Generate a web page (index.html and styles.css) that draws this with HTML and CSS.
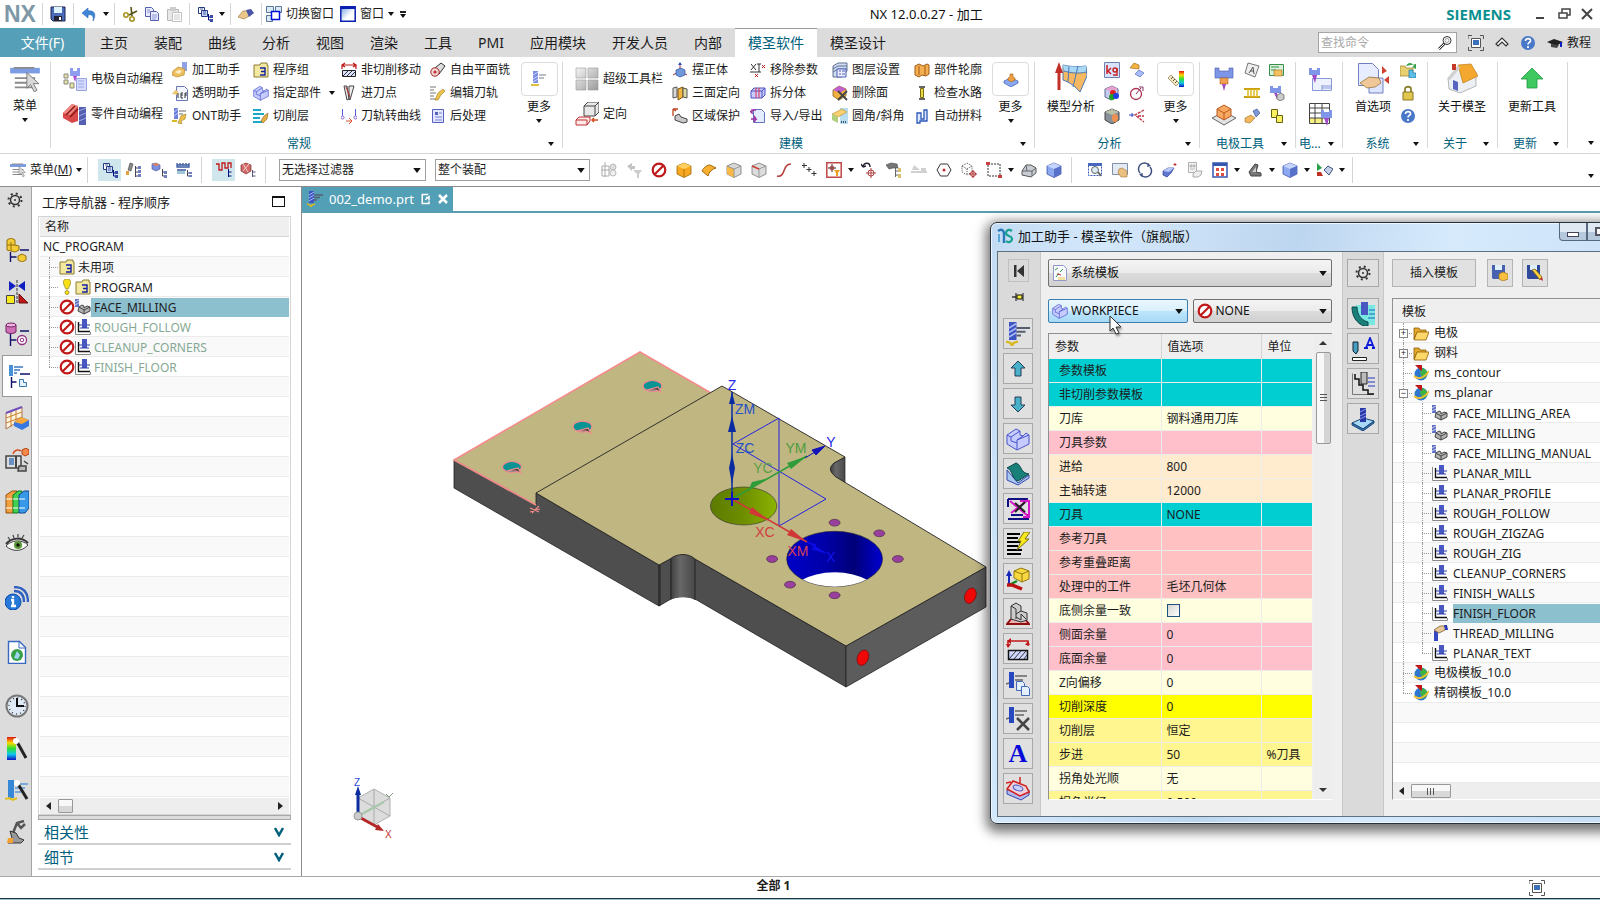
FILE: index.html
```html
<!DOCTYPE html>
<html lang="zh-CN">
<head>
  <meta charset="UTF-8">
  <title>NX 12.0.0.27 - 加工</title>
  <link rel="stylesheet" href="styles.css">
</head>
<body>
  <!-- icon sprite -->
  <svg class="sprite" width="0" height="0">
    <defs>
      <linearGradient id="rainbow" x1="0" y1="0" x2="0" y2="1">
        <stop offset="0" stop-color="#e01010"/><stop offset=".25" stop-color="#ffd800"/><stop offset=".5" stop-color="#30e030"/><stop offset=".75" stop-color="#10c8f0"/><stop offset="1" stop-color="#1010c0"/>
      </linearGradient>
      <linearGradient id="steel" x1="0" y1="0" x2="1" y2="1">
        <stop offset="0" stop-color="#f4f4f4"/><stop offset="1" stop-color="#9a9a9a"/>
      </linearGradient>
      <linearGradient id="sky" x1="0" y1="0" x2="1" y2="1">
        <stop offset="0" stop-color="#6f9fe0"/><stop offset=".6" stop-color="#fff"/>
      </linearGradient>
    </defs>
    <symbol id="down" viewBox="0 0 6 4"><path d="M0 0h6L3 4z" fill="#111"/></symbol>
    <symbol id="save" viewBox="0 0 16 16"><path d="M1 1h14v14H3l-2-2z" fill="#4a6cb8" stroke="#1b2450"/><path d="M4 1h8v6H4z" fill="#dff3fb"/><path d="M4 10h8v5H4z" fill="#223"/><path d="M9 11h2v3H9z" fill="#fff"/></symbol>
    <symbol id="undo" viewBox="0 0 16 16"><path d="M1 7l6-5v3c6-1 9 3 5 10 1-5-1-7-5-6v3z" fill="#3f86d8" stroke="#2a66b4" stroke-width=".6"/></symbol>
    <symbol id="cut" viewBox="0 0 16 16"><path d="M9 1l1 9M15 5L7 9" stroke="#56511a" stroke-width="1.600"/><g fill="none" stroke="#a8951f" stroke-width="1.600"><circle cx="4" cy="9" r="2.200"/><circle cx="10" cy="13" r="2.200"/></g></symbol>
    <symbol id="copy" viewBox="0 0 16 16"><g fill="#e9ecff" stroke="#5560b0"><path d="M1.500 1.500h6l2 2v7h-8z"/><path d="M6.500 5.500h6l2 2v7h-8z"/></g><path d="M8 9h5M8 11h5M8 13h4M3 4h3M3 6h3" stroke="#7680c8" stroke-width=".8"/></symbol>
    <symbol id="paste" viewBox="0 0 16 16"><path d="M1.500 3.500h11v11h-11z" fill="#e8e8e8" stroke="#b8b8b8"/><path d="M4 1h6v4H4z" fill="#ccc"/><path d="M6.500 6.500h9v9h-9z" fill="#fff" stroke="#c0c0c0"/><path d="M8 9h6M8 11h6M8 13h6" stroke="#ccc"/></symbol>
    <symbol id="tree" viewBox="0 0 16 16"><path d="M1.500 1.500h6v6h-6z" fill="#fff" stroke="#223a80"/><path d="M4.500 4.500h6v6h-6z" fill="#cdd8ff" stroke="#223a80"/><path d="M6 6h3M6 8h3M3 3h3" stroke="#223a80" stroke-width=".8"/><path d="M11.500 8v6h3M11.500 11h3" stroke="#000c80" fill="none"/><path d="M13 9h3v3h-3zM13 13h3v3h-3z" fill="#3a4aa8"/></symbol>
    <symbol id="eraser" viewBox="0 0 16 16"><path d="M0 11l5-6 5 0 1 5-5 3z" fill="#e9c88a" stroke="#a07840" stroke-width=".7"/><path d="M8 4l5-1 3 4-5 4z" fill="#4b55a8"/></symbol>
    <symbol id="windows" viewBox="0 0 16 16"><g fill="#dcebf8" stroke="#5b7896"><path d="M.5.5h7v6h-7zM9.500.500h6v6h-6zM.5 9.500h6v6h-6z"/></g><path d="M5.500 5.500h8v8h-8z" fill="#fff" stroke="#0010d8" stroke-width="1.500"/></symbol>
    <symbol id="window" viewBox="0 0 16 16"><path d="M.8.8h14.400v14.400H.8z" fill="url(#sky)" stroke="#0a1eb0" stroke-width="1.500"/><path d="M1 2h14" stroke="#0a1eb0" stroke-width="2"/></symbol>
    <symbol id="menu" viewBox="0 0 32 28"><path d="M0 2h32v6H0z" fill="#7c9ce4"/><path d="M4 1h22v2H4zM5 12h22v2H5zM5 17h18v2H5zM5 22h22v2H5z" fill="#8b8b8b"/><path d="M18 7v17l4-4 4 8 3-2-4-7h6z" fill="#d8d8d8" stroke="#777"/></symbol>
    <symbol id="tool" viewBox="0 0 16 16"><path d="M2 0h5v12H2z" fill="#3d55c0"/><path d="M2 4l5-3M2 7l5-3M2 10l5-3" stroke="#a8b8f8"/><path d="M7 4h9M7 6.500h6M7 9h3" stroke="#555d70" stroke-width="1.300"/><path d="M0 13l3 1 1 2 1-2 3-1" stroke="#d8b820" stroke-width="1.500" fill="none"/></symbol>
    <symbol id="toolpale" viewBox="0 0 16 16"><path d="M2 0h5v12H2z" fill="#7c8fe0"/><path d="M2 4l5-3M2 8l5-3M2 11l5-3" stroke="#c8d2ff"/><path d="M8 4h7M8 7h5" stroke="#777e90"/><path d="M0 14h8" stroke="#e0c040" stroke-width="2"/></symbol>
    <symbol id="autoe" viewBox="0 0 24 24"><path d="M7 1h3v3h4V1h3v8H7z" fill="#8d9df0"/><path d="M10 9h4l-2 6z" fill="#b050d8"/><path d="M1 7h4v4H1zM1 13h4v4H1zM7 16h4v5H7z" fill="#e8e2a0" stroke="#888"/><path d="M13.500 11.500h10v12h-10z" fill="#d6dcff" stroke="#98a4e0"/><path d="M15 14h6M15 17h6M15 20h6" stroke="#98a4e0"/></symbol>
    <symbol id="autop" viewBox="0 0 24 24"><path d="M0 11l9-9 6 2v15l-6 2-9-5z" fill="#d84848"/><path d="M0 11l9-9 6 2-8 9z" fill="#f08a80"/><path d="M3 13l9-9M7 15l8-8" stroke="#8a1818" stroke-width="1.500"/><path d="M16 5h7v18h-7z" fill="#5560b0"/><path d="M16 9l7-3M16 14l7-3M16 19l7-3" stroke="#9aa4e8"/></symbol>
    <symbol id="assist" viewBox="0 0 16 16"><path d="M10 0h5v9h-5z" fill="#8fa2e8"/><path d="M1 9l5-4 7 2-1 6-7 2-5-2z" fill="#ecc060" stroke="#b88828" stroke-width=".7"/><path d="M3 10l4-2 3 1-3 3z" fill="#fdf0c8"/></symbol>
    <symbol id="trans" viewBox="0 0 16 16"><path d="M4.500 1.500h8l3 3v11h-11z" fill="#f4f6ff" stroke="#6a74b0"/><path d="M0 9l3-4 3 1v4z" fill="#ecc878"/><path d="M6 8v5M9 8h2M9 8v5M9 10h2M9 13h2M13 13V8h2M13 10h2" stroke="#333" fill="none"/></symbol>
    <symbol id="ont" viewBox="0 0 16 16"><path d="M2 0h4v11H2z" fill="#6f80d8"/><path d="M2 4l4-3M2 8l4-3" stroke="#c0ccff"/><path d="M7 3h7M7 6h4" stroke="#666"/><path d="M6 15l3-7 5-2-1 5-4 2 1 3z" fill="#ecc24c" stroke="#a07818" stroke-width=".6"/><path d="M0 13h5" stroke="#d8b820" stroke-width="2"/></symbol>
    <symbol id="progfolder" viewBox="0 0 16 16"><path d="M1 3h6l1-2h6v2h1v12H1z" fill="#f3e8a0" stroke="#8c7c30"/><path d="M7 6h5v7H7M8 9.500h4" stroke="#1420a0" stroke-width="1.400" fill="none"/></symbol>
    <symbol id="block" viewBox="0 0 24 24"><path d="M1 8l9-6 4 2v4l3 1 3-3 3 2v9l-12 6-10-6z" fill="#c6ccff" stroke="#4a55c8"/><path d="M1 8l4 2 9-6M5 10v4l6 2v7M11 16v-3l6-4M11 13l12-5" stroke="#4a55c8" fill="none"/></symbol>
    <symbol id="layers" viewBox="0 0 16 16"><path d="M0 2h8M0 6h11M0 10h7M0 14h9" stroke="#1ea8c8" stroke-width="1.800"/><path d="M8 13l3-5 4-3-1 6-4 4z" fill="#e8b040" stroke="#80581c" stroke-width=".6"/></symbol>
    <symbol id="noncut" viewBox="0 0 16 16"><path d="M1 7V3h14v4M4 1L1 3l3 2M12 1l3 2-3 2" stroke="#c01818" fill="none" stroke-width="1.200"/><path d="M1.500 8.500h13v6h-13z" fill="#dce2ff" stroke="#222"/><path d="M2 14l5-5M6 14l5-5M10 14l4-4" stroke="#333"/></symbol>
    <symbol id="entry" viewBox="0 0 16 16"><path d="M3 1h3l2 13-2 1zM8 1h5L9 15l-1-1z" fill="#eee" stroke="#444"/><path d="M5 2l4 10" stroke="#c03030"/></symbol>
    <symbol id="tocurve" viewBox="0 0 16 16"><path d="M1.500 1v7M14.500 1v7" stroke="#5560d0"/><circle cx="1.500" cy="9.500" r="1.500" fill="none" stroke="#8060d0"/><circle cx="14.500" cy="9.500" r="1.500" fill="none" stroke="#8060d0"/><path d="M5 13h5M8 10l3 3-3 3" stroke="#e05030" fill="none"/></symbol>
    <symbol id="freeplane" viewBox="0 0 16 16"><path d="M5 6l6-5 4 3-6 8z" fill="#ddd" stroke="#333"/><circle cx="5" cy="10" r="4.200" fill="#f4d8d8" stroke="#a02020"/><circle cx="5" cy="10" r="1.600" fill="#c03030"/></symbol>
    <symbol id="editpath" viewBox="0 0 16 16"><path d="M0 2h6M0 5h4M0 8h6M0 11h4M0 14h6" stroke="#777"/><path d="M5 15l3-7 5-4 2 2-4 4-3 5z" fill="#ecc24c" stroke="#9a7a18" stroke-width=".6"/></symbol>
    <symbol id="post" viewBox="0 0 16 16"><path d="M2.500 1.500h11v13h-11z" fill="#e4e8ff" stroke="#5560c0"/><path d="M5 4h3v3H5z" fill="#5560c0"/><path d="M9 5h3M5 9h7M5 12h7" stroke="#7680d8"/></symbol>
    <symbol id="tiles" viewBox="0 0 24 24"><path d="M1 1h10v10H1zM13 1h10v10H13zM1 13h10v10H1zM13 13h10v10H13z" fill="url(#steel)" stroke="#999" stroke-width=".6"/></symbol>
    <symbol id="orient" viewBox="0 0 24 24"><path d="M9 4l4-4h11v10l-4 4H9zM9 4h11v10M20 4l4-4" fill="#e8e8e8" stroke="#444"/><path d="M1 18l3-3h11v4l-3 4H1zM1 18h11v5" fill="#ffe8e8" stroke="#c03030"/><path d="M23 18h-6M19 16l-2 2 2 2" stroke="#d05020" fill="none" stroke-width="1.500"/></symbol>
    <symbol id="straight" viewBox="0 0 16 16"><path d="M8 1v8M8 9l7 4M8 9l-7 4" stroke="#b03030" fill="none"/><path d="M8 0l2 3H6z" fill="#3050c0"/><path d="M4 8l5-2 4 2v5l-5 2-4-2z" fill="#6f98d8" stroke="#3050a0" stroke-width=".7"/></symbol>
    <symbol id="threeface" viewBox="0 0 16 16"><path d="M1 3l4-1v10l-4 1z" fill="#d8d8d8" stroke="#555"/><path d="M6 4l5-2v10l-5 3z" fill="#f4b840" stroke="#7a5410"/><path d="M11 3l4 1v9l-4-1z" fill="#dcd8a0" stroke="#555"/></symbol>
    <symbol id="region" viewBox="0 0 16 16"><path d="M1 1v7M1 1l3 2M1 1h5" stroke="#c04020" fill="none" stroke-width="1.300"/><path d="M3 8l4-2 2 3 6 2v3l-4 1-8-3z" fill="#c8c8c8" stroke="#444"/></symbol>
    <symbol id="rmparam" viewBox="0 0 16 16"><path d="M1 2l5 6M6 2L1 8M9 2v8M7 2h4M0 10h11" stroke="#333"/><path d="M12 3l3 3M15 3l-3 3M5 12l3 3M8 12l-3 3" stroke="#c02020"/></symbol>
    <symbol id="split" viewBox="0 0 16 16"><path d="M1 6l3-3h11v7l-3 3H1z" fill="#c8ccff" stroke="#4a50c0"/><path d="M1 6h11v7M12 6l3-3" stroke="#4a50c0" fill="none"/><path d="M6 3v10M9 3v10" stroke="#e03050"/></symbol>
    <symbol id="impexp" viewBox="0 0 16 16"><path d="M3.500 1.500h8l3 3v10h-11z" fill="#e4ecff" stroke="#6074c0"/><path d="M6 2H2v3L0 3M1 11h5l-2-3M6 11l-2 3" stroke="#a030a0" fill="none" stroke-width="1.500"/></symbol>
    <symbol id="layerset" viewBox="0 0 16 16"><path d="M1 4l5-3h9v8l-5 6H1z" fill="#d0dcf4" stroke="#607090"/><path d="M1 7l5-3h9M1 10l5-3h9" stroke="#607090" fill="none"/><path d="M5 7h9v8H5z" fill="#eef" stroke="#4a60b8"/><path d="M7 9h2M10 9h3M7 12h2M10 12h3" stroke="#4a60b8"/></symbol>
    <symbol id="delface" viewBox="0 0 16 16"><path d="M1 5l6-4 7 3v7l-7 4-6-4z" fill="#f0b040" stroke="#805010" stroke-width=".7"/><path d="M1 5l6-4 7 3-6 4z" fill="#c060d0"/><path d="M6 6l9 9M15 6l-9 9" stroke="#444" stroke-width="1.800"/></symbol>
    <symbol id="chamfer" viewBox="0 0 16 16"><path d="M8 0h8v16H8z" fill="#b8dcf0"/><path d="M0 6l10-5 5 3-9 5z" fill="#f8d070" stroke="#b08830" stroke-width=".6"/><path d="M0 6l6 3v6l-6-3z" fill="#b0d080"/><path d="M9 14h6" stroke="#223" stroke-dasharray="1 1" stroke-width="1.500"/></symbol>
    <symbol id="outline" viewBox="0 0 16 16"><path d="M1 4l4-2 4 2 4-2 2 1v9l-3 2-4-1-3 2-4-2z" fill="#f4b050" stroke="#a05818"/><path d="M5 4v9M11 4v9" stroke="#a05818"/></symbol>
    <symbol id="water" viewBox="0 0 16 16"><path d="M5 1h6v2H5zM5 13h6v2H5z" fill="#666"/><path d="M6.500 3.500h3v9h-3z" fill="#f0d840" stroke="#7a6c10"/></symbol>
    <symbol id="join" viewBox="0 0 16 16"><path d="M3 15V5h4v6h3V2h3v11H6v2z" fill="#dce8ff" stroke="#2c58b8" stroke-width="1.300"/></symbol>
    <symbol id="stamp" viewBox="0 0 16 16"><path d="M1 10l7-3 7 3v2l-7 4-7-4z" fill="#88a8f0" stroke="#3858b0" stroke-width=".7"/><path d="M5 9V7l2-1V3h3v3l2 1v2L8 11z" fill="#f0a040" stroke="#a06010" stroke-width=".6"/></symbol>
    <symbol id="surf" viewBox="0 0 32 32"><path d="M8 3c8 2 16 2 23 1l1 10-7 16C20 24 14 20 8 18z" fill="#f6b860" stroke="#4a78b8"/><path d="M8 3c8 2 16 2 23 1v6C24 11 16 11 9 9z" fill="#a8d8f4"/><path d="M14 4l-1 16M23 4l-5 21M9 9c7 2 15 3 22 1" stroke="#4a78b8" fill="none"/><path d="M4 28V8" stroke="#c03028" stroke-width="3"/><path d="M4 0l4 11H0z" fill="#c03028"/></symbol>
    <symbol id="kg" viewBox="0 0 16 16"><path d="M.5.5h15v15H.5z" fill="#d8e4ff" stroke="#7080b0"/><path d="M3 3v9M7 6l-3 3 3 3" stroke="#c82020" fill="none" stroke-width="1.500"/><circle cx="11" cy="8" r="2" fill="none" stroke="#c82020" stroke-width="1.400"/><path d="M13 6v7h-4" stroke="#c82020" fill="none" stroke-width="1.400"/></symbol>
    <symbol id="rgbcube" viewBox="0 0 16 16"><path d="M1 4l7-3 6 3v8l-7 3-6-3z" fill="#c4ccf0" stroke="#606890"/><path d="M1 4l7-3 6 3-7 3z" fill="#e8a0d0"/><circle cx="9" cy="8" r="3" fill="#e02020"/><circle cx="8" cy="12" r="3" fill="#20a020"/><circle cx="12" cy="11" r="3" fill="#2040e0"/></symbol>
    <symbol id="cubehole" viewBox="0 0 16 16"><path d="M1 4l7-3 7 3v8l-7 4-7-4z" fill="#8a9098" stroke="#444"/><path d="M1 4l7-3 7 3-7 3z" fill="#b8c0a8"/><ellipse cx="11" cy="10" rx="3" ry="4" fill="#f09050"/></symbol>
    <symbol id="compare" viewBox="0 0 16 16"><path d="M1 6l4-5 5 2v4z" fill="#f4b040" stroke="#9a6414" stroke-width=".6"/><path d="M6 12l4-4 5 3-4 4z" fill="#a8bcf8" stroke="#4058b8" stroke-width=".6"/></symbol>
    <symbol id="radius" viewBox="0 0 16 16"><circle cx="7" cy="9" r="5.500" fill="none" stroke="#b03050" stroke-width="1.300"/><path d="M7 9l5-6M10 2h4v4" stroke="#803060" fill="none"/></symbol>
    <symbol id="draft" viewBox="0 0 16 16"><path d="M15 2L6 7l9 7M9 8h6" stroke="#c03040" fill="none" stroke-dasharray="3 1" stroke-width="1.300"/><path d="M5 7H0M3 5v4" stroke="#3040c0"/></symbol>
    <symbol id="rule" viewBox="0 0 16 16"><path d="M11 0h5v16h-5z" fill="url(#rainbow)"/><path d="M0 7l3-3 8 8-3 3z" fill="#f4e8c0" stroke="#907850" stroke-width=".7"/><path d="M3 8l2-2M5 10l2-2M7 12l2-2" stroke="#554"/></symbol>
    <symbol id="electrode" viewBox="0 0 24 24"><path d="M3 1h4v3h10V1h4v10H3z" fill="#7f95e8" stroke="#4458a8" stroke-width=".6"/><path d="M8 11h8v6H8z" fill="#f0a050" stroke="#b06820" stroke-width=".6"/><path d="M10 17h4l-2 7z" fill="#a048c8"/></symbol>
    <symbol id="ebox" viewBox="0 0 24 24"><path d="M0 16l12-6 12 6-12 7z" fill="#e4e4e4" stroke="#666"/><path d="M5 7l7-4 7 4v7l-7 4-7-4z" fill="#f8a860" stroke="#b85a20"/><path d="M5 7l7 4 7-4M12 11v7" stroke="#b85a20" fill="none"/></symbol>
    <symbol id="asheet" viewBox="0 0 16 16"><path d="M4 1l11 3-4 11L1 11z" fill="#eee" stroke="#777"/><path d="M5 11l4-6 1 7M6 9h4" stroke="#555" fill="none"/></symbol>
    <symbol id="yellowt" viewBox="0 0 16 16"><path d="M0 4h16M0 12h16" stroke="#c8a010" stroke-width="2"/><path d="M4 4v8M7 4v8M10 4v8M13 4v8" stroke="#e0bc20" stroke-width="1.500"/></symbol>
    <symbol id="pencil" viewBox="0 0 16 16"><path d="M1 10l6-3 4 3-5 5-5-1z" fill="#f4b860" stroke="#a07020" stroke-width=".6"/><path d="M9 3l4-2 3 4-4 4z" fill="#8098d8" stroke="#304080" stroke-width=".6"/></symbol>
    <symbol id="card" viewBox="0 0 16 16"><path d="M.500 2.500h14v11H.500z" fill="#d8f0dc" stroke="#389048"/><path d="M2 5h8M2 8h5" stroke="#389048"/><path d="M5 8h8v6H5z" fill="#f4c060" stroke="#a07020" stroke-width=".6"/></symbol>
    <symbol id="esmall" viewBox="0 0 16 16"><path d="M1 1h3v2h5V1h3v7H1z" fill="#7f95e8"/><path d="M5 8h3v6z" fill="#a048c8"/><path d="M8 10l4-2 3 2v4l-4 2-3-2z" fill="#ccc" stroke="#555" stroke-width=".7"/></symbol>
    <symbol id="ysquares" viewBox="0 0 16 16"><path d="M2.500 1.500h6v8h-6z" fill="#f8f060" stroke="#666010"/><path d="M7.500 7.500h6v7h-6z" fill="#f8f060" stroke="#666010"/></symbol>
    <symbol id="edraw" viewBox="0 0 24 24"><path d="M4.500 11.500h19v12h-19zM14 19h9M14 21h9M14 18v5" fill="#eef2ff" stroke="#8898d8"/><path d="M1 1h3v2h5V1h3v7H1z" fill="#7f95e8"/><path d="M4 8h5l-2 8z" fill="#a048c8"/></symbol>
    <symbol id="etable" viewBox="0 0 24 24"><path d="M1 1h20v20H1z" fill="#fff"/><path d="M1 16h14v5H1z" fill="#f8f080"/><path d="M1.500 1.500h20v20h-20zM1 6h20M1 11h20M1 16h20M7 1v20M14 1v20" stroke="#444" fill="none"/><path d="M13 8h3v2h5V8h3v8H13z" fill="#7f95e8"/><path d="M16 16h5l-2 8z" fill="#a048c8"/></symbol>
    <symbol id="prefs" viewBox="0 0 32 32"><path d="M1.500 1.500h14l6 6v16h-20z" fill="#e8ecff" stroke="#7080c0"/><path d="M12 16h14v15H12z" fill="#dce4ff" stroke="#7080c0"/><path d="M3 21l9-6 10 1 2 5-6 4-8 1z" fill="#f0c898" stroke="#906830" stroke-width=".7"/><path d="M25 4l5 5-5 3zM32 14v8l-5-4z" fill="#d04030"/></symbol>
    <symbol id="folderarrow" viewBox="0 0 16 16"><path d="M0 4h5l1 2h7v8H0z" fill="#e8d070" stroke="#9a8020" stroke-width=".7"/><path d="M6 4c2-4 6-4 8 0l-2 1 4 2 0-5" fill="#38a048"/><path d="M9 8h4v3h3v5H9z" fill="#60c0e8" stroke="#1c70a0" stroke-width=".7"/></symbol>
    <symbol id="lock" viewBox="0 0 16 16"><path d="M5 8V4c0-3 6-3 6 0v4" fill="none" stroke="#8c8030" stroke-width="1.800"/><path d="M3 7h10v8H3z" fill="#e0c850" stroke="#8c7420"/></symbol>
    <symbol id="help" viewBox="0 0 16 16"><circle cx="8" cy="8" r="7" fill="#4a78c8"/><path d="M5.500 6c0-3.500 5.500-3 5 0-.3 1.500-2.500 1.500-2.500 3.500M8 11v2" stroke="#fff" stroke-width="1.700" fill="none"/></symbol>
    <symbol id="house" viewBox="0 0 32 32"><path d="M2 16L12 5l18 5v14L14 31 3 27z" fill="#eceff4" stroke="#999" stroke-width=".7"/><path d="M12 3l13-1 7 12-15 7z" fill="#f4a830" stroke="#c07c10" stroke-width=".7"/><path d="M1 17L12 3l2 3L4 18z" fill="#d0d0d0"/><path d="M6 2h4v6H6z" fill="#c83828"/><path d="M7 18l5 2v9l-5-2z" fill="#5864c0"/></symbol>
    <symbol id="uparrow" viewBox="0 0 24 24"><path d="M12 2l11 11h-6v9H7v-9H1z" fill="#40c860" stroke="#209840" stroke-width=".8"/></symbol>
    <symbol id="fullscr" viewBox="0 0 16 16"><path d="M0 4V.5h4M12 .5h3.500V4M15.500 12v3.500H12M4 15.500H.5V12" fill="none" stroke="#555"/><path d="M3.500 3.500h9v9h-9z" fill="#fff" stroke="#555"/><path d="M5 5h6v5H5z" fill="#3c70b8"/></symbol>
    <symbol id="hat" viewBox="0 0 16 16"><path d="M0 7l7-3 9 3-7 4z" fill="#222"/><path d="M4 9v3l6 1 2-3" fill="#444"/><path d="M14 7v5" stroke="#1020c0" stroke-width="2"/></symbol>
    <symbol id="find" viewBox="0 0 16 16"><circle cx="10" cy="5.500" r="4" fill="#fff" stroke="#333"/><circle cx="10" cy="5.500" r="2" fill="none" stroke="#777" stroke-width=".7"/><path d="M7.500 8.500L2 14" stroke="#333" stroke-width="2.500"/><path d="M7 9l-5 5" stroke="#fff"/></symbol>
    <!-- selection bar -->
    <symbol id="treetool" viewBox="0 0 16 16"><path d="M4 1l3 1-2 7-3-1z" fill="#888" stroke="#444" stroke-width=".6"/><path d="M0 9h3v4H0z" fill="#e0a040"/><path d="M9.500 4v11M9.500 6h3M9.500 10h3M9.500 14h3" stroke="#445"/><path d="M12 4h3v3h-3zM12 8h3v3h-3zM12 12h3v3h-3z" fill="#7080c0"/></symbol>
    <symbol id="treegeo" viewBox="0 0 16 16"><path d="M1 2l4-1 4 2v4L5 9 1 7z" fill="#7c90e0" stroke="#404c90" stroke-width=".6"/><path d="M1 2l4-1 4 2-4 1z" fill="#e08060"/><path d="M11.500 7v7h3M11.500 10h3" stroke="#445" fill="none"/><path d="M13 9h3v3h-3zM13 13h3v3h-3z" fill="#7080c0"/></symbol>
    <symbol id="treemeth" viewBox="0 0 16 16"><path d="M1 1v4h12V1M1 3h12M4 1v2M7 1v2M10 1v2M1 8h9" stroke="#3858a0" fill="none" stroke-width="1.300"/><path d="M1 9h8v3H1z" fill="#a0c8d8"/><path d="M11.500 8v6h3M11.500 11h3" stroke="#445" fill="none"/><path d="M13 10h3v2h-3zM13 13h3v2h-3z" fill="#7080c0"/></symbol>
    <symbol id="redpath" viewBox="0 0 16 16"><path d="M0 2h3v6h3V1h3v5h3V1h3v5" stroke="#c01818" fill="none" stroke-width="1.300"/><path d="M12.500 7v8M12.500 10h3M12.500 14h3" stroke="#000c80"/></symbol>
    <symbol id="redcube" viewBox="0 0 16 16"><path d="M1 3l5-2 5 2v6l-5 3-5-3z" fill="#d06868" stroke="#803030" stroke-width=".7"/><path d="M3 2l5 8M9 2l-6 7" stroke="#f8d0d0"/><path d="M12.500 8v7M12.500 10h3M12.500 14h3" stroke="#557"/></symbol>
    <symbol id="greya" viewBox="0 0 16 16"><path d="M1 4h7v10H1zM4 0v15M0 8h9" stroke="#aaa" fill="none"/><circle cx="12" cy="5" r="3" fill="#ddd" stroke="#bbb"/><circle cx="12" cy="11" r="3" fill="#eee" stroke="#bbb"/></symbol>
    <symbol id="greyb" viewBox="0 0 16 16"><path d="M1 4l5-3v3h3v3H6v2z" fill="#c4c4c4"/><path d="M7 8h9l-3 4v4h-2v-4z" fill="#ccc"/></symbol>
    <symbol id="no" viewBox="0 0 16 16"><circle cx="8" cy="8" r="6.300" fill="#fff" stroke="#c01818" stroke-width="2.200"/><path d="M12.500 3.500l-9 9" stroke="#c01818" stroke-width="2.200"/></symbol>
    <symbol id="cubeo" viewBox="0 0 16 16"><path d="M1 4l7-3 7 3v8l-7 3.500L1 12z" fill="#f8a820" stroke="#a06808" stroke-width=".8"/><path d="M1 4l7-3 7 3-7 3z" fill="#ffd060"/><path d="M8 7v8" stroke="#a06808" stroke-width=".8"/></symbol>
    <symbol id="face" viewBox="0 0 16 16"><path d="M1 9c2-4 5-6 8-6l6 3c-4 1-7 4-8 8z" fill="#f8b030" stroke="#a06808"/></symbol>
    <symbol id="cubef" viewBox="0 0 16 16"><path d="M1 4l7-3 7 3v8l-7 3.500L1 12z" fill="#d8d8d8" stroke="#777" stroke-width=".8"/><path d="M1 4l7 3v8.500L1 12z" fill="#f8b848"/><path d="M1 4l7 3 7-3M8 7v8" stroke="#888" stroke-width=".8" fill="none"/></symbol>
    <symbol id="cubeg" viewBox="0 0 16 16"><path d="M1 4l7-3 7 3v8l-7 3.500L1 12z" fill="#dcdcdc" stroke="#777" stroke-width=".8"/><path d="M1 4l7 3 7-3M8 7v8" stroke="#999" fill="none"/><path d="M1 4l7 3" stroke="#d04030" stroke-width="1.500"/></symbol>
    <symbol id="curve" viewBox="0 0 16 16"><path d="M1 14c9 2 5-12 14-12" fill="none" stroke="#b84040" stroke-width="1.600"/></symbol>
    <symbol id="points" viewBox="0 0 16 16"><path d="M3 1v5M1 3.500h5M8 5v5M5.500 7.500h5M13 9v5M10.500 11.500h5" stroke="#333"/></symbol>
    <symbol id="snap" viewBox="0 0 16 16"><path d="M.8.8h14.400v14.400H.8z" fill="#fff" stroke="#c04848" stroke-width="1.500"/><path d="M6 2v8M2 6h8" stroke="#333"/><circle cx="6" cy="6" r="2" fill="none" stroke="#c03030"/><path d="M8 8h6l-2 3v3h-2v-3z" fill="#f0a020"/></symbol>
    <symbol id="rot" viewBox="0 0 16 16"><path d="M2 5c1-5 7-5 7 0M2 5L0 2M2 5l3-1" stroke="#223" fill="none" stroke-width="1.400"/><circle cx="10" cy="11" r="3" fill="none" stroke="#b04040"/><path d="M10 6v10M5 11h10" stroke="#b04040"/></symbol>
    <symbol id="binoc" viewBox="0 0 16 16"><path d="M0 3l5-2 6 1 1 4H7L3 7z" fill="#777" stroke="#444" stroke-width=".6"/><path d="M9.500 6v9M9.500 9h3M9.500 13h3" stroke="#666"/><path d="M12 6h3v4h-3zM12 12h3v4h-3z" fill="#d8c070"/></symbol>
    <symbol id="greyc" viewBox="0 0 16 16"><path d="M0 9h16v2H0zM3 3l6 5H1zM10 6h5v3h-5z" fill="#d0d0d0"/></symbol>
    <symbol id="hex" viewBox="0 0 16 16"><path d="M4.500 2h7L15 8l-3.500 6h-7L1 8z" fill="#fff" stroke="#333"/><circle cx="8" cy="8" r="1.500" fill="#c03030"/></symbol>
    <symbol id="ghost" viewBox="0 0 16 16"><path d="M1 4l5-3 5 3v6l-5 3-5-3zM1 4l5 3 5-3M6 7v6" fill="none" stroke="#555" stroke-dasharray="1 1"/><circle cx="12" cy="12" r="2.500" fill="#fff" stroke="#b03030"/><path d="M12 8v8M8 12h8" stroke="#b03030"/></symbol>
    <symbol id="rect" viewBox="0 0 16 16"><path d="M2 2h12v12H2z" fill="none" stroke="#333" stroke-dasharray="2 1"/><path d="M0 0h4v3H0zM12 13h4v3h-4z" fill="#c84040"/></symbol>
    <symbol id="shape" viewBox="0 0 16 16"><path d="M1 9l4-6h5l5 3v5l-5 4-9-2z" fill="#c8ccd4" stroke="#555"/><path d="M5 3l1 6-5 0M6 9l5 0 4-3M11 9v5" stroke="#666" fill="none"/></symbol>
    <symbol id="cubeb" viewBox="0 0 16 16"><path d="M1 4l7-3 7 3v8l-7 3.500L1 12z" fill="#8ca8f0" stroke="#3c50a8" stroke-width=".8"/><path d="M1 4l7-3 7 3-7 3z" fill="#c4d4fc"/><path d="M8 7l7-3v8l-7 3.500z" fill="#5870c8"/></symbol>
    <symbol id="fit" viewBox="0 0 16 16"><path d="M1.500 2.500h13v11h-13z" fill="#fff" stroke="#3858b0" stroke-dasharray="2 1"/><path d="M1 1h14v3H1z" fill="#4868c0"/><circle cx="8" cy="8" r="3.500" fill="#dceaf4" stroke="#666"/><path d="M11 10l3 4" stroke="#666" stroke-width="2"/></symbol>
    <symbol id="pan" viewBox="0 0 16 16"><path d="M.500 1.500h15v11H.500z" fill="#e4eaf4" stroke="#8090a8"/><path d="M7 7l3-1 5 3v6H9l-3-4z" fill="#ecc080" stroke="#a07838" stroke-width=".6"/></symbol>
    <symbol id="refresh" viewBox="0 0 16 16"><path d="M3 11a6 6 0 0 1 9-8M13 5a6 6 0 0 1-9 8" fill="none" stroke="#405080" stroke-width="1.500"/><path d="M11 1l3 3-4 1zM5 15l-3-3 4-1z" fill="#405080"/></symbol>
    <symbol id="persp" viewBox="0 0 16 16"><path d="M1 9l5-3 6 0-3 5-4 4-4-2z" fill="#6078d0" stroke="#303c90" stroke-width=".7"/><path d="M1 9l5-3 6 0-5 4z" fill="#b8c8f8"/><path d="M13 1v3M11.500 2.500h3" stroke="#c03030"/></symbol>
    <symbol id="greyd" viewBox="0 0 16 16"><path d="M1.500.500h8v10h-8z" fill="#f4f4f4" stroke="#b0b0b0"/><path d="M3 3h2v2H3zM6 3h2v2H6zM3 7h5" fill="#bbb" stroke="#bbb"/><path d="M6 12l3-3h6l-1 4-3 2H6z" fill="#eee" stroke="#aaa"/></symbol>
    <symbol id="grid4" viewBox="0 0 16 16"><path d="M1 1h14v14H1z" fill="#fff" stroke="#3858b0" stroke-width="1.500"/><path d="M1 1h14v3H1z" fill="#3858b0"/><path d="M4 6h3v3H4zM9 6h3v3H9zM4 11h3v3H4zM9 11h3v3H9z" fill="#e05040"/></symbol>
    <symbol id="clip" viewBox="0 0 16 16"><path d="M2 10L8 2l3 1-2 7 5 1v3H4z" fill="#777" stroke="#444"/><path d="M5 10l4-5v5z" fill="#ccc"/></symbol>
    <symbol id="replay" viewBox="0 0 16 16"><path d="M0 1l5 5-5 3z" fill="#28a048"/><path d="M0 10h4l2 4H0z" fill="#c03020"/><path d="M7 8l4-4 5 3-4 6z" fill="#c4d0e8" stroke="#405080"/></symbol>
    <!-- navigator -->
    <symbol id="gear" viewBox="0 0 16 16"><circle cx="8" cy="8" r="4.500" fill="none" stroke="#333" stroke-width="1.500"/><circle cx="8" cy="8" r="6.500" fill="none" stroke="#333" stroke-width="2" stroke-dasharray="2 3.100"/><circle cx="8" cy="8" r="1" fill="#333"/></symbol>
    <symbol id="nassy" viewBox="0 0 24 24"><path d="M2 2l4-2 4 2v5l4 1v4l-4 2-8-2z" fill="#f4cc38" stroke="#94700c"/><path d="M2 7h8M6 4v9" stroke="#94700c"/><path d="M15 12h9M5.500 14v11M5.500 19h6" stroke="#10106c" stroke-width="1.400"/><path d="M13 18l4-2 4 2v4l-4 2-4-2z" fill="#f4cc38" stroke="#94700c"/></symbol>
    <symbol id="ncons" viewBox="0 0 24 24"><path d="M4 1l7 5-7 5zM20 1l-7 5 7 5z" fill="#1020c0"/><path d="M12 0v24" stroke="#333" stroke-dasharray="3 1"/><path d="M1.500 15.500h8v8h-8z" fill="#f8e820" stroke="#444"/><path d="M14 14l9 9h-9z" fill="#c01818" stroke="#601010"/></symbol>
    <symbol id="npart" viewBox="0 0 24 24"><path d="M1 3v7c2 2 8 2 10 0V3" fill="#d070b8" stroke="#702060"/><ellipse cx="6" cy="3" rx="5" ry="2" fill="#f0b0e0" stroke="#702060"/><path d="M15 9h9M5.500 12v12M5.500 18h6" stroke="#10106c" stroke-width="1.400"/><circle cx="17" cy="18" r="4.500" fill="#fff" stroke="#903080" stroke-width="1.300"/><circle cx="17" cy="18" r="1.800" fill="none" stroke="#903080"/></symbol>
    <symbol id="nop" viewBox="0 0 24 24"><path d="M3 1h4v11H3z" fill="#4890d8"/><path d="M8 3h9M8 6h6M8 9h3" stroke="#3878c0" stroke-width="1.500"/><path d="M14 10h10M5.500 13v11M5.500 18h5" stroke="#10106c" stroke-width="1.400"/><path d="M13.500 15.500h4v3h3v4h-7z" fill="#e4f0fc" stroke="#3878b0"/></symbol>
    <symbol id="nmach" viewBox="0 0 24 24"><path d="M1 7l16-6v12L1 23z" fill="#fff4dc" stroke="#b07050"/><path d="M1 12l16-6M1 17l16-6M6 5v16M11 3v15" stroke="#c88030"/><path d="M1 7l16-6" stroke="#7050c0" stroke-width="2"/><path d="M9 16l7-5 8 3v6l-7 4-8-4z" fill="#3878e0"/><path d="M9 16l7-5 8 3-7 4z" fill="#f8a838"/></symbol>
    <symbol id="nproc" viewBox="0 0 24 24"><path d="M1 8h15v12H1z" fill="#ddd" stroke="#444" stroke-width="1.500"/><path d="M4 10h5v7H4z" fill="#6890c0"/><path d="M11 8v12" stroke="#444" stroke-width="2"/><path d="M8 6c1-4 5-5 8-3" fill="none" stroke="#d85020" stroke-width="1.500"/><path d="M17 2l4-2 3 2v4l-4 2-3-2z" fill="#f88848" stroke="#b04010"/><path d="M14 18h7v5h-8zM19 13l4 3" stroke="#444" fill="#bbb" stroke-width="1.500"/></symbol>
    <symbol id="nbook" viewBox="0 0 24 24"><path d="M1 5l6-4h5v18l-4 4H1z" fill="#f0a040" stroke="#905010"/><path d="M8 5l5-4h4v18l-4 4H8z" fill="#40d050" stroke="#107820"/><path d="M14 5l5-4h5v17l-4 5h-6z" fill="#3898e8" stroke="#104890"/><path d="M1 9h6M8 9h5M14 9h6M1 18h6M8 18h5M14 18h6" stroke="#fff"/></symbol>
    <symbol id="neye" viewBox="0 0 24 24"><path d="M1 14C6 8 17 7 23 13 17 20 7 20 1 14z" fill="#f8f8f4" stroke="#444"/><circle cx="13" cy="13" r="4" fill="#5c9838"/><circle cx="13" cy="13" r="1.700" fill="#111"/><path d="M1 12C7 5 17 5 23 11" stroke="#333" fill="none" stroke-width="2"/><path d="M5 8L3 5M9 6L8 3M13 5V2M17 6l2-3" stroke="#444" stroke-width="1.200"/></symbol>
    <symbol id="ninfo" viewBox="0 0 24 24"><path d="M9 5c7 0 10 4 10 11M9 1c9 0 14 5 14 15" fill="none" stroke="#3060c0" stroke-width="2.300"/><circle cx="8" cy="16" r="8" fill="#2878d8" stroke="#0c4cb0"/><path d="M8 10v2M6 14h2v6M6 20h5" stroke="#fff" stroke-width="2.300" fill="none"/></symbol>
    <symbol id="nweb" viewBox="0 0 24 24"><path d="M3.500 1.500h11l6 6v16h-17z" fill="#fff" stroke="#3868c0" stroke-width="1.400"/><path d="M14 2v6h6" fill="none" stroke="#3868c0"/><circle cx="12" cy="15" r="6" fill="#38a048"/><path d="M9 18l3-7 3 4-2 4z" fill="#a0d8f4"/></symbol>
    <symbol id="nclock" viewBox="0 0 24 24"><circle cx="12" cy="12" r="10.500" fill="#dfeaf6" stroke="#777" stroke-width="2"/><circle cx="12" cy="12" r="8" fill="none" stroke="#444" stroke-width="1.500" stroke-dasharray="1 3.190"/><path d="M12 4v8h7" stroke="#111" stroke-width="2" fill="none"/></symbol>
    <symbol id="nrain" viewBox="0 0 24 24"><path d="M2 1h9v23H2z" fill="url(#rainbow)"/><path d="M11 4l10 18" stroke="#222" stroke-width="3"/><circle cx="11" cy="5" r="3" fill="#fff"/></symbol>
    <symbol id="ntoolw" viewBox="0 0 24 24"><path d="M3 2h6v18H3z" fill="#3888d8"/><path d="M10 6h13M10 10h10M10 14h6" stroke="#5898d8" stroke-width="1.500"/><path d="M0 21l4-1 4 2 4-2" stroke="#e0c020" stroke-width="2" fill="none"/><path d="M13 6l9 15" stroke="#222" stroke-width="3"/><circle cx="12" cy="5" r="3" fill="#fff"/></symbol>
    <symbol id="nrobot" viewBox="0 0 24 24"><path d="M8 13L12 3l7-2M12 3l4 5 4-4" stroke="#555" stroke-width="2.500" fill="none"/><path d="M5 11l6 2 3 5 5 2-3 3H3l4-5z" fill="#999" stroke="#333"/><path d="M3 18h5v5H2z" fill="#f4a030"/></symbol>
    <symbol id="mill" viewBox="0 0 16 16"><path d="M0 0h4v8H0z" fill="#6070c8"/><path d="M0 3l4-2M0 6l4-2" stroke="#ccd"/><path d="M4 8l3-2 2 1v2l3-2 3 1v4l-6 3-6-3z" fill="#b4b4b4" stroke="#444"/><path d="M4 8l5 3 6-3M9 11v4" stroke="#444" fill="none"/></symbol>
    <symbol id="planar" viewBox="0 0 16 16"><path d="M.500 2v13.500h15V13" fill="#fff" stroke="#888"/><path d="M3.500 3v9.500H15" stroke="#111" fill="none" stroke-width="1.400"/><path d="M7 0h5v9H7z" fill="#4858c0"/><path d="M4 6h3M12 6h3M5 9h9" stroke="#2838a8"/></symbol>
    <symbol id="thread" viewBox="0 0 16 16"><path d="M2 6h4v10H2z" fill="#3848c0"/><path d="M2 5l6-4 6 0-1 4-6 3z" fill="#e8c898" stroke="#7c5c30" stroke-width=".8"/><path d="M12 0h3l1 5-3 0z" fill="#2838b8"/></symbol>
    <symbol id="warn" viewBox="0 0 8 16"><path d="M4 0c4 0 4 3 3 6L5 10H3L1 6C0 3 0 0 4 0z" fill="#f8e018" stroke="#8c7c10" stroke-width=".7"/><circle cx="4" cy="13.500" r="2" fill="#f8e018" stroke="#8c7c10" stroke-width=".7"/></symbol>
    <symbol id="folder" viewBox="0 0 16 16"><path d="M1 3h5l1 2h6v3H4l-3 6z" fill="#e4a828" stroke="#8c5c08" stroke-width=".8"/><path d="M4 7h12l-3 8H1z" fill="#fcd868" stroke="#8c5c08" stroke-width=".8"/></symbol>
    <symbol id="globe" viewBox="0 0 16 16"><circle cx="8" cy="9" r="6.500" fill="#2c78d0"/><path d="M8 3c5 0 7 4 6 8l-4 3-3-6z" fill="#40b048"/><path d="M1 11c4 4 11 2 15-5" stroke="#f0c030" fill="none" stroke-width="1.800"/><path d="M2 0h7l0 6-3-2z" fill="#c01818"/></symbol>
    <!-- dialog -->
    <symbol id="ms" viewBox="0 0 16 16"><path d="M1 3c4-3 6 0 6 3v9" fill="none" stroke="#2878b8" stroke-width="2.400"/><path d="M2 6v8" stroke="#58a8d8" stroke-width="2"/><path d="M15 3c-3-2-6-1-6 2 0 4 6 2 6 6 0 3-4 4-6 2" fill="none" stroke="#18a090" stroke-width="2.200"/></symbol>
    <symbol id="first" viewBox="0 0 16 16"><path d="M3 2h2.500v12H3zM13 2v12L6 8z" fill="#333"/></symbol>
    <symbol id="pin" viewBox="0 0 12 12"><path d="M0 6h4" stroke="#111" stroke-width="1.200"/><path d="M4 2v8M5 4h5v4H5z" stroke="#111" fill="#f8f030"/><path d="M11 2v8" stroke="#111"/></symbol>
    <symbol id="aup" viewBox="0 0 16 16"><path d="M8 0l7 7h-4v8H5V7H1z" fill="#48b0c8" stroke="#243c58"/></symbol>
    <symbol id="adown" viewBox="0 0 16 16"><path d="M8 16l7-7h-4V1H5v8H1z" fill="#48b0c8" stroke="#243c58"/></symbol>
    <symbol id="teal" viewBox="0 0 24 24"><path d="M1 8v10l11 5 11-7v-3L12 21z" fill="#a8c8f0" stroke="#3848b0"/><path d="M1 6l9-5c6 2 4 10 13 11l-11 7C6 18 7 8 1 6z" fill="#188078" stroke="#0c4850"/></symbol>
    <symbol id="purx" viewBox="0 0 24 24"><path d="M2 2h20M2 2v8M2 22h20v-5M5 18h12" stroke="#101080" stroke-width="2" fill="none"/><path d="M4 4l18 15M22 3L5 16M14 4h9v16h-6" stroke="#d818c8" stroke-width="2" fill="none"/><path d="M9 6l10 9M19 5L9 15" stroke="#222" stroke-width="2"/></symbol>
    <symbol id="flash" viewBox="0 0 24 24"><path d="M1 2h13M1 6h11M1 10h13M1 14h11M1 18h15M1 22h14" stroke="#000" stroke-width="2"/><path d="M18 0h6l-5 7h4L11 18l4-9h-3z" fill="#f8e820" stroke="#7c7010"/></symbol>
    <symbol id="csys" viewBox="0 0 24 24"><path d="M3 18V7" stroke="#1828b8" stroke-width="2"/><path d="M3 3l3 6H0z" fill="#1828b8"/><path d="M3 18l8-4" stroke="#109020" stroke-width="2.500"/><path d="M1 18h5l10 4" stroke="#c01010" stroke-width="3.500" fill="none"/><path d="M8 4l7-3 8 3v8l-7 3-8-4z" fill="#f8d840" stroke="#94780c"/><path d="M8 4l8 3 7-3M16 7v8" stroke="#94780c" fill="none"/></symbol>
    <symbol id="redbase" viewBox="0 0 24 24"><path d="M5 17l-4 5h22l-4-5" fill="#e8b0b0" stroke="#901010" stroke-width="2"/><path d="M5 4l5-3 5 3v5l6 2v7l-6 2-10-3z" fill="#ccc" stroke="#333"/><path d="M5 4l5 3v10M15 9l-5 3M15 12v6l-5-3M15 12l5 5" stroke="#333" fill="none"/></symbol>
    <symbol id="hatch" viewBox="0 0 24 24"><path d="M2 10V4h20v5M2 4h8M14 4h4" stroke="#c01818" stroke-width="1.500" fill="none"/><path d="M0 7l2 4 3-4M5 1L1 4l4 3M19 8l3-4 2 4" fill="#c01818"/><path d="M2.500 13.500h19v9h-19z" fill="#d0d8ff" stroke="#111" stroke-width="1.500"/><path d="M3 22l7-8M8 22l7-8M13 22l7-8M18 22l3-4" stroke="#333"/></symbol>
    <symbol id="tcopy" viewBox="0 0 24 24"><path d="M3 0h5v16H3z" fill="#2848c0"/><path d="M0 12l3-1M9 4h12M9 8h8" stroke="#666" stroke-width="1.500"/><path d="M10.500 9.500h6l2 2v7h-8z" fill="#e4f0ff" stroke="#4468b8"/><path d="M15.500 14.500h6l2 2v7h-8z" fill="#e4f0ff" stroke="#4468b8"/></symbol>
    <symbol id="tdel" viewBox="0 0 24 24"><path d="M3 0h5v16H3z" fill="#2848c0"/><path d="M0 12l3-1M9 4h12M9 8h9" stroke="#666" stroke-width="1.500"/><path d="M11 11l12 12M23 11L11 23" stroke="#444" stroke-width="2.500"/></symbol>
    <symbol id="redpart" viewBox="0 0 24 24"><path d="M1 13v4l14 6 8-5v-5z" fill="#b0b8f0" stroke="#3848b0"/><path d="M1 12l6-8 13 5 3 6-9 4z" fill="#f0d0d8" stroke="#d02020" stroke-width="1.500"/><ellipse cx="12" cy="11" rx="5" ry="2.500" fill="#c8d0ff" stroke="#4858c0" transform="rotate(18 12 11)"/><path d="M14 0v6M0 6l5-1" stroke="#d02020" stroke-width="1.500"/></symbol>
    <symbol id="cavity" viewBox="0 0 24 24"><path d="M5 3h19v20h-5C10 21 5 12 5 3z" fill="#78e8e0"/><path d="M1 5h5c0 9 6 14 11 15v4h-4C5 21 1 14 1 5z" fill="#188078" stroke="#0c4850"/><path d="M10 0h7v13h-7z" fill="#4858c0"/><path d="M18 8h6M18 12h6M17 16h7" stroke="#2060c0"/></symbol>
    <symbol id="texta" viewBox="0 0 24 24"><path d="M2 5h5v9l-2 3-3-3z" fill="#48a0c0" stroke="#123"/><path d="M1.500 20.500h14v3h-14z" fill="#fff" stroke="#222"/><path d="M15 11l4-10 4 10M16 8h6M13 11h4M21 11h3" stroke="#0818d8" stroke-width="1.800" fill="none"/></symbol>
    <symbol id="zlevel" viewBox="0 0 24 24"><path d="M1.500 1.500v21h21" fill="none" stroke="#777"/><path d="M4 2v5h4v6h4v5h5v4h6" fill="none" stroke="#111" stroke-width="1.500"/><path d="M10 0h6v12h-6z" fill="#bbb" stroke="#222"/><path d="M17 6h7M17 10h7M17 14h7" stroke="#2838c0"/></symbol>
    <symbol id="plate" viewBox="0 0 24 24"><path d="M1 16l11-5 11 3-11 8z" fill="#a8d8f8" stroke="#184878"/><path d="M1 16v2l11 6 11-8v-2l-11 8z" fill="#3c78b8" stroke="#184878"/><path d="M9 1h6v14H9z" fill="#2838a8"/><path d="M9 5l6-3M9 9l6-3M9 12l6-3" stroke="#8898e8"/></symbol>
    <symbol id="doc" viewBox="0 0 16 16"><path d="M1.500.500h10l3 3v12h-13z" fill="#f8faff" stroke="#9098c8"/><path d="M3 5l3-2M8 7l3-3M4 12l3-4" stroke="#30a040"/><path d="M5 9l4 1" stroke="#c03030"/><path d="M6 12h7v3H6z" fill="#f4e0a0"/></symbol>
    <symbol id="savebox" viewBox="0 0 16 16"><path d="M0 0h13v14H1l-1-1z" fill="#4860b0"/><path d="M3 0h7v5H3z" fill="#e0f0f8"/><path d="M7 9l4-2 5 2v5l-5 2-4-2z" fill="#f8c040" stroke="#a07010" stroke-width=".7"/></symbol>
    <symbol id="savepen" viewBox="0 0 16 16"><path d="M0 0h13v14H1l-1-1z" fill="#30489c"/><path d="M3 0h7v5H3z" fill="#e0f0f8"/><path d="M5 5l3-1 7 8-2 3z" fill="#f8d040" stroke="#705010" stroke-width=".7"/><path d="M13 14l2-2 1 4z" fill="#c02020"/></symbol>
    <symbol id="edit" viewBox="0 0 16 16"><path d="M11 2H3v12h9v-3" fill="none" stroke="#fff" stroke-width="2"/><path d="M7 9l6-5M8 6h4v4" stroke="#fff" stroke-width="2" fill="none"/></symbol>
  </svg>

  <div class="app">
    <header class="titlebar">
      <div class="quick">
        <span class="nx-logo">NX</span>
        <i class="sep"></i>
        <button class="qa" title="保存"><svg class="ic"><use href="#save"/></svg></button>
        <i class="sep"></i>
        <button class="qa has-drop" title="撤消"><svg class="ic"><use href="#undo"/></svg><svg class="drop"><use href="#down"/></svg></button>
        <i class="sep"></i>
        <button class="qa"><svg class="ic"><use href="#cut"/></svg></button>
        <button class="qa"><svg class="ic"><use href="#copy"/></svg></button>
        <button class="qa"><svg class="ic"><use href="#paste"/></svg></button>
        <i class="sep"></i>
        <button class="qa has-drop"><svg class="ic"><use href="#tree"/></svg><svg class="drop"><use href="#down"/></svg></button>
        <i class="sep"></i>
        <button class="qa"><svg class="ic"><use href="#eraser"/></svg></button>
        <i class="sep"></i>
        <button class="qa-text"><svg class="ic"><use href="#windows"/></svg>切换窗口</button>
        <button class="qa-text"><svg class="ic"><use href="#window"/></svg>窗口<svg class="drop"><use href="#down"/></svg></button>
        <button class="qa-more" title="更多"><svg class="drop"><use href="#down"/></svg></button>
      </div>
      <h1 class="title">NX 12.0.0.27 - 加工</h1>
      <span class="siemens">SIEMENS</span>
      <div class="win-btns">
        <button title="最小化"><svg width="12" height="12" viewBox="0 0 12 12"><path d="M1 10h8" stroke="#444" stroke-width="2"/></svg></button>
        <button title="还原"><svg width="13" height="12" viewBox="0 0 13 12"><path d="M1 5h8v5H1zM4 5V1h8v6H9" fill="none" stroke="#444" stroke-width="1.500"/></svg></button>
        <button title="关闭"><svg width="12" height="12" viewBox="0 0 12 12"><path d="M1 1l10 10M11 1L1 11" stroke="#444" stroke-width="2"/></svg></button>
      </div>
    </header>

    <nav class="tabs">
      <button class="tab file">文件(F)</button>
      <button class="tab">主页</button>
      <button class="tab">装配</button>
      <button class="tab">曲线</button>
      <button class="tab">分析</button>
      <button class="tab">视图</button>
      <button class="tab">渲染</button>
      <button class="tab">工具</button>
      <button class="tab">PMI</button>
      <button class="tab">应用模块</button>
      <button class="tab">开发人员</button>
      <button class="tab">内部</button>
      <button class="tab active">模圣软件</button>
      <button class="tab">模圣设计</button>
      <div class="tabs-right">
        <div class="search">
          <input type="text" placeholder="查找命令" aria-label="查找命令">
          <svg class="ic"><use href="#find"/></svg>
        </div>
        <button><svg class="ic"><use href="#fullscr"/></svg></button>
        <button><svg width="14" height="12" viewBox="0 0 14 12"><path d="M1 7l6-6 6 6-2 2-4-4-4 4z" fill="#fff" stroke="#333" stroke-width="1.200"/></svg></button>
        <button><svg class="ic"><use href="#help"/></svg></button>
        <button class="tutorial"><svg class="ic"><use href="#hat"/></svg>教程</button>
      </div>
    </nav>

    <section class="ribbon">
      <button class="big menu-btn"><svg class="ic-menu"><use href="#menu"/></svg><span>菜单</span><svg class="drop"><use href="#down"/></svg></button>

      <div class="group general">
        <div class="group-body">
          <div class="col two">
            <button class="cmd"><svg class="ic24"><use href="#autoe"/></svg>电极自动编程</button>
            <button class="cmd"><svg class="ic24"><use href="#autop"/></svg>零件自动编程</button>
          </div>
          <div class="col">
            <button class="cmd"><svg class="ic"><use href="#assist"/></svg>加工助手</button>
            <button class="cmd"><svg class="ic"><use href="#trans"/></svg>透明助手</button>
            <button class="cmd"><svg class="ic"><use href="#ont"/></svg>ONT助手</button>
          </div>
          <div class="col">
            <button class="cmd"><svg class="ic"><use href="#progfolder"/></svg>程序组</button>
            <button class="cmd"><svg class="ic"><use href="#block"/></svg>指定部件<svg class="drop"><use href="#down"/></svg></button>
            <button class="cmd"><svg class="ic"><use href="#layers"/></svg>切削层</button>
          </div>
          <div class="col">
            <button class="cmd"><svg class="ic"><use href="#noncut"/></svg>非切削移动</button>
            <button class="cmd"><svg class="ic"><use href="#entry"/></svg>进刀点</button>
            <button class="cmd"><svg class="ic"><use href="#tocurve"/></svg>刀轨转曲线</button>
          </div>
          <div class="col">
            <button class="cmd"><svg class="ic"><use href="#freeplane"/></svg>自由平面铣</button>
            <button class="cmd"><svg class="ic"><use href="#editpath"/></svg>编辑刀轨</button>
            <button class="cmd"><svg class="ic"><use href="#post"/></svg>后处理</button>
          </div>
          <button class="big more"><span class="more-box"><svg class="ic"><use href="#toolpale"/></svg></span><span>更多</span><svg class="drop"><use href="#down"/></svg></button>
        </div>
        <div class="group-title"><span>常规</span><svg class="drop"><use href="#down"/></svg></div>
      </div>

      <div class="group modeling">
        <div class="group-body">
          <div class="col two">
            <button class="cmd"><svg class="ic24"><use href="#tiles"/></svg>超级工具栏</button>
            <button class="cmd"><svg class="ic24"><use href="#orient"/></svg>定向</button>
          </div>
          <div class="col">
            <button class="cmd"><svg class="ic"><use href="#straight"/></svg>摆正体</button>
            <button class="cmd"><svg class="ic"><use href="#threeface"/></svg>三面定向</button>
            <button class="cmd"><svg class="ic"><use href="#region"/></svg>区域保护</button>
          </div>
          <div class="col">
            <button class="cmd"><svg class="ic"><use href="#rmparam"/></svg>移除参数</button>
            <button class="cmd"><svg class="ic"><use href="#split"/></svg>拆分体</button>
            <button class="cmd"><svg class="ic"><use href="#impexp"/></svg>导入/导出</button>
          </div>
          <div class="col">
            <button class="cmd"><svg class="ic"><use href="#layerset"/></svg>图层设置</button>
            <button class="cmd"><svg class="ic"><use href="#delface"/></svg>删除面</button>
            <button class="cmd"><svg class="ic"><use href="#chamfer"/></svg>圆角/斜角</button>
          </div>
          <div class="col">
            <button class="cmd"><svg class="ic"><use href="#outline"/></svg>部件轮廓</button>
            <button class="cmd"><svg class="ic"><use href="#water"/></svg>检查水路</button>
            <button class="cmd"><svg class="ic"><use href="#join"/></svg>自动拼料</button>
          </div>
          <button class="big more"><span class="more-box"><svg class="ic"><use href="#stamp"/></svg></span><span>更多</span><svg class="drop"><use href="#down"/></svg></button>
        </div>
        <div class="group-title"><span>建模</span><svg class="drop"><use href="#down"/></svg></div>
      </div>

      <div class="group analysis">
        <div class="group-body">
          <button class="big"><svg class="ic32"><use href="#surf"/></svg><span>模型分析</span></button>
          <div class="col">
            <button class="cmd"><svg class="ic"><use href="#kg"/></svg></button>
            <button class="cmd"><svg class="ic"><use href="#rgbcube"/></svg></button>
            <button class="cmd"><svg class="ic"><use href="#cubehole"/></svg></button>
          </div>
          <div class="col">
            <button class="cmd"><svg class="ic"><use href="#compare"/></svg></button>
            <button class="cmd"><svg class="ic"><use href="#radius"/></svg></button>
            <button class="cmd"><svg class="ic"><use href="#draft"/></svg></button>
          </div>
          <button class="big more"><span class="more-box"><svg class="ic"><use href="#rule"/></svg></span><span>更多</span><svg class="drop"><use href="#down"/></svg></button>
        </div>
        <div class="group-title"><span>分析</span><svg class="drop"><use href="#down"/></svg></div>
      </div>

      <div class="group etools">
        <div class="group-body">
          <div class="col two">
            <button class="cmd"><svg class="ic24"><use href="#electrode"/></svg></button>
            <button class="cmd"><svg class="ic24"><use href="#ebox"/></svg></button>
          </div>
          <div class="col">
            <button class="cmd"><svg class="ic"><use href="#asheet"/></svg></button>
            <button class="cmd"><svg class="ic"><use href="#yellowt"/></svg></button>
            <button class="cmd"><svg class="ic"><use href="#pencil"/></svg></button>
          </div>
          <div class="col">
            <button class="cmd"><svg class="ic"><use href="#card"/></svg></button>
            <button class="cmd"><svg class="ic"><use href="#esmall"/></svg></button>
            <button class="cmd"><svg class="ic"><use href="#ysquares"/></svg></button>
          </div>
        </div>
        <div class="group-title"><span>电极工具</span><svg class="drop"><use href="#down"/></svg></div>
      </div>

      <div class="group edraw">
        <div class="group-body">
          <div class="col two">
            <button class="cmd"><svg class="ic24"><use href="#edraw"/></svg></button>
            <button class="cmd"><svg class="ic24"><use href="#etable"/></svg></button>
          </div>
        </div>
        <div class="group-title"><span>电...</span><svg class="drop"><use href="#down"/></svg></div>
      </div>

      <div class="group system">
        <div class="group-body">
          <button class="big"><svg class="ic32"><use href="#prefs"/></svg><span>首选项</span></button>
          <div class="col">
            <button class="cmd"><svg class="ic"><use href="#folderarrow"/></svg></button>
            <button class="cmd"><svg class="ic"><use href="#lock"/></svg></button>
            <button class="cmd"><svg class="ic"><use href="#help"/></svg></button>
          </div>
        </div>
        <div class="group-title"><span>系统</span><svg class="drop"><use href="#down"/></svg></div>
      </div>

      <div class="group about">
        <div class="group-body">
          <button class="big"><svg class="ic32"><use href="#house"/></svg><span>关于模圣</span></button>
        </div>
        <div class="group-title"><span>关于</span><svg class="drop"><use href="#down"/></svg></div>
      </div>

      <div class="group about">
        <div class="group-body">
          <button class="big"><svg class="ic32 inset"><use href="#uparrow"/></svg><span>更新工具</span></button>
        </div>
        <div class="group-title"><span>更新</span><svg class="drop"><use href="#down"/></svg></div>
      </div>
      <div class="group tail"><button class="bar-end"><svg class="drop"><use href="#down"/></svg></button></div>
    </section>

    <section class="selbar">
      <button class="selmenu"><svg class="ic"><use href="#menu"/></svg><span>菜单(<u>M</u>)</span><svg class="drop"><use href="#down"/></svg></button>
      <i class="sep"></i>
      <button class="cell on"><svg class="ic"><use href="#tree"/></svg></button>
      <button class="cell"><svg class="ic"><use href="#treetool"/></svg></button>
      <button class="cell"><svg class="ic"><use href="#treegeo"/></svg></button>
      <button class="cell"><svg class="ic"><use href="#treemeth"/></svg></button>
      <i class="sep"></i>
      <button class="cell on"><svg class="ic"><use href="#redpath"/></svg></button>
      <button class="cell"><svg class="ic"><use href="#redcube"/></svg></button>
      <i class="sep"></i>
      <div class="picker filter"><select aria-label="选择过滤器"><option>无选择过滤器</option></select><svg class="drop"><use href="#down"/></svg></div>
      <div class="picker scope"><select aria-label="选择范围"><option>整个装配</option></select><svg class="drop"><use href="#down"/></svg></div>
      <button class="cell"><svg class="ic"><use href="#greya"/></svg></button>
      <button class="cell"><svg class="ic"><use href="#greyb"/></svg></button>
      <button class="cell"><svg class="ic"><use href="#no"/></svg></button>
      <button class="cell"><svg class="ic"><use href="#cubeo"/></svg></button>
      <button class="cell"><svg class="ic"><use href="#face"/></svg></button>
      <button class="cell"><svg class="ic"><use href="#cubef"/></svg></button>
      <button class="cell"><svg class="ic"><use href="#cubeg"/></svg></button>
      <button class="cell"><svg class="ic"><use href="#curve"/></svg></button>
      <button class="cell"><svg class="ic"><use href="#points"/></svg></button>
      <button class="cell wide"><svg class="ic"><use href="#snap"/></svg><svg class="drop"><use href="#down"/></svg></button>
      <button class="cell"><svg class="ic"><use href="#rot"/></svg></button>
      <button class="cell"><svg class="ic"><use href="#binoc"/></svg></button>
      <button class="cell"><svg class="ic"><use href="#greyc"/></svg></button>
      <button class="cell"><svg class="ic"><use href="#hex"/></svg></button>
      <button class="cell"><svg class="ic"><use href="#ghost"/></svg></button>
      <button class="cell wide"><svg class="ic"><use href="#rect"/></svg><svg class="drop"><use href="#down"/></svg></button>
      <button class="cell"><svg class="ic"><use href="#shape"/></svg></button>
      <button class="cell"><svg class="ic"><use href="#cubeb"/></svg></button>
      <i class="sep"></i>
      <button class="cell"><svg class="ic"><use href="#fit"/></svg></button>
      <button class="cell"><svg class="ic"><use href="#pan"/></svg></button>
      <button class="cell"><svg class="ic"><use href="#refresh"/></svg></button>
      <button class="cell"><svg class="ic"><use href="#persp"/></svg></button>
      <button class="cell"><svg class="ic"><use href="#greyd"/></svg></button>
      <button class="cell wide"><svg class="ic"><use href="#grid4"/></svg><svg class="drop"><use href="#down"/></svg></button>
      <button class="cell wide"><svg class="ic"><use href="#clip"/></svg><svg class="drop"><use href="#down"/></svg></button>
      <button class="cell wide"><svg class="ic"><use href="#cubeb"/></svg><svg class="drop"><use href="#down"/></svg></button>
      <button class="cell wide"><svg class="ic"><use href="#replay"/></svg><svg class="drop"><use href="#down"/></svg></button>
      <i class="sep"></i>
      <button class="bar-end"><svg class="drop"><use href="#down"/></svg></button>
    </section>

    <main class="workspace">
      <nav class="rail">
        <button class="rail-gear"><svg class="ic"><use href="#gear"/></svg></button>
        <button class="rail-btn"><svg class="ic24"><use href="#nassy"/></svg></button>
        <button class="rail-btn"><svg class="ic24"><use href="#ncons"/></svg></button>
        <button class="rail-btn"><svg class="ic24"><use href="#npart"/></svg></button>
        <button class="rail-btn active"><svg class="ic24"><use href="#nop"/></svg></button>
        <button class="rail-btn"><svg class="ic24"><use href="#nmach"/></svg></button>
        <button class="rail-btn"><svg class="ic24"><use href="#nproc"/></svg></button>
        <button class="rail-btn"><svg class="ic24"><use href="#nbook"/></svg></button>
        <button class="rail-btn"><svg class="ic24"><use href="#neye"/></svg></button>
        <button class="rail-btn spaced"><svg class="ic24"><use href="#ninfo"/></svg></button>
        <button class="rail-btn spaced"><svg class="ic24"><use href="#nweb"/></svg></button>
        <button class="rail-btn spaced"><svg class="ic24"><use href="#nclock"/></svg></button>
        <button class="rail-btn"><svg class="ic24"><use href="#nrain"/></svg></button>
        <button class="rail-btn"><svg class="ic24"><use href="#ntoolw"/></svg></button>
        <button class="rail-btn"><svg class="ic24"><use href="#nrobot"/></svg></button>
      </nav>

      <aside class="navigator">
        <div class="nav-head"><h2>工序导航器 - 程序顺序</h2><button class="dock" title="浮动"></button></div>
        <div class="nav-tree">
          <div class="nav-col">名称</div>
          <ul class="tree">
            <li class="root">NC_PROGRAM</li>
            <li class="node"><svg class="ic"><use href="#progfolder"/></svg><span>未用项</span></li>
            <li class="node"><svg class="ic"><use href="#warn"/></svg><svg class="ic"><use href="#progfolder"/></svg><span>PROGRAM</span></li>
            <li class="node selected"><svg class="ic"><use href="#no"/></svg><svg class="ic"><use href="#mill"/></svg><span>FACE_MILLING</span></li>
            <li class="node dim"><svg class="ic"><use href="#no"/></svg><svg class="ic"><use href="#planar"/></svg><span>ROUGH_FOLLOW</span></li>
            <li class="node dim"><svg class="ic"><use href="#no"/></svg><svg class="ic"><use href="#planar"/></svg><span>CLEANUP_CORNERS</span></li>
            <li class="node dim last"><svg class="ic"><use href="#no"/></svg><svg class="ic"><use href="#planar"/></svg><span>FINISH_FLOOR</span></li>
          </ul>
          <div class="hscroll">
            <svg width="5" height="8" viewBox="0 0 5 8"><path d="M5 0v8L0 4z" fill="#222"/></svg>
            <i class="thumb"></i>
            <svg class="to-end" width="5" height="8" viewBox="0 0 5 8"><path d="M0 0v8l5-4z" fill="#222"/></svg>
          </div>
        </div>
        <div class="splitter"></div>
        <button class="fold">相关性<svg width="12" height="10" viewBox="0 0 12 10"><path d="M2 1l4 7 4-7" fill="none" stroke="#005f7c" stroke-width="2.500"/></svg></button>
        <button class="fold">细节<svg width="12" height="10" viewBox="0 0 12 10"><path d="M2 1l4 7 4-7" fill="none" stroke="#005f7c" stroke-width="2.500"/></svg></button>
      </aside>

      <section class="view">
        <div class="doc-tabs">
          <div class="doc-tab"><svg class="ic"><use href="#tool"/></svg><span>002_demo.prt</span><svg class="ic12"><use href="#edit"/></svg><button title="关闭"><svg width="10" height="10" viewBox="0 0 10 10"><path d="M1 1l8 8M9 1L1 9" stroke="#fff" stroke-width="2.500"/></svg></button></div>
        </div>
        <svg class="part" viewBox="0 0 560 360">
          <defs>
            <linearGradient id="gGreen"><stop offset="0" stop-color="#5c7a00"/><stop offset=".5" stop-color="#6e8e00"/><stop offset="1" stop-color="#8cb400"/></linearGradient>
            <linearGradient id="gBlue"><stop offset="0" stop-color="#0000c8"/><stop offset=".4" stop-color="#0000a8"/><stop offset=".7" stop-color="#000078"/><stop offset="1" stop-color="#0000d0"/></linearGradient>
            <linearGradient id="gNotch"><stop offset="0" stop-color="#3c3c3c"/><stop offset=".4" stop-color="#686868"/><stop offset="1" stop-color="#484848"/></linearGradient>
            <clipPath id="bore"><ellipse cx="394.600" cy="219" rx="47.900" ry="27.700"/></clipPath>
          </defs>
          <!-- lower step -->
          <path d="M14 120L200 12l71 41-175 112z" fill="#c0b682"/>
          <path d="M14 120v28l205 118v-41L96 153v12z" fill="#4e4e4e" stroke="#222" stroke-width=".8"/>
          <path d="M96 165L14 120 200 12l71 41" fill="none" stroke="#f58c8c" stroke-width="1.600"/>
          <!-- right notch wall -->
          <path d="M405 117v27l-12-7-3-8 4-6z" fill="url(#gNotch)" stroke="#222" stroke-width=".7"/>
          <!-- front faces -->
          <path d="M219 225v41l12-7c6-3 18-3 24 0l151 88v-41l-151-87c-6-6-18-6-25 0z" fill="#4e4e4e" stroke="#222" stroke-width=".8"/>
          <path d="M230 219c6-6 19-6 25 0v41c-6-4-18-4-25 0z" fill="url(#gNotch)"/>
          <path d="M220 225v41M231 219v40M255 219v41" stroke="#1c1c1c" stroke-width=".8"/>
          <path d="M406 306l140-79v40L406 347z" fill="#5c5c5c" stroke="#222" stroke-width=".8"/>
          <path d="M96 153L282 46l123 71-11 6c-6 5-4 9 2 14l150 90-140 79-151-87c-6-6-18-6-25 0l-11 6z" fill="#c0b682" stroke="#222" stroke-width=".9"/>
          <ellipse cx="303.600" cy="166" rx="33.200" ry="19" fill="url(#gGreen)" stroke="#333" stroke-width=".6"/>
          <ellipse cx="394.600" cy="219" rx="47.900" ry="27.700" fill="url(#gBlue)" stroke="#222" stroke-width=".6"/>
          <ellipse cx="394.600" cy="260" rx="47.900" ry="27.700" fill="#fff" clip-path="url(#bore)"/>
          <g fill="#98409c" stroke="#402040" stroke-width=".6">
            <ellipse cx="394.600" cy="182.700" rx="5.500" ry="3.400"/><ellipse cx="439.300" cy="193.300" rx="5.500" ry="3.400"/><ellipse cx="457.900" cy="219" rx="5.500" ry="3.400"/>
            <ellipse cx="394.600" cy="255.300" rx="5.500" ry="3.400"/><ellipse cx="350" cy="244.700" rx="5.500" ry="3.400"/><ellipse cx="332.100" cy="219" rx="5.500" ry="3.400"/>
          </g>
          <g fill="#f00808" stroke="#701010" stroke-width=".7">
            <ellipse cx="530.400" cy="255.700" rx="5.500" ry="8" transform="rotate(22 530.400 255.700)"/>
            <ellipse cx="422.900" cy="317.700" rx="5.500" ry="8" transform="rotate(22 422.900 317.700)"/>
          </g>
          <g stroke="#f58c8c" stroke-width="1.200">
            <ellipse cx="212.500" cy="46" rx="9.500" ry="5.500" fill="#0c9494"/><ellipse cx="142.500" cy="86.700" rx="9.500" ry="5.500" fill="#0c9494"/><ellipse cx="72" cy="127" rx="9.500" ry="5.500" fill="#0c9494"/>
            <path d="M207 50h9l5 2-3-5zM137 91h9l5 2-3-5zM67 131h9l5 2-3-5z" fill="#484848"/>
            <path d="M90 168l9 4M99 166l-7 7M90 172l10-3" fill="none"/>
          </g>
          <!-- datum planes and axes -->
          <path d="M339 186V78l-46 26 93 55-47 27" fill="none" stroke="#2424e0" stroke-width="1"/>
          <path d="M292 159V52" stroke="#0a2ca0" stroke-width="1.500"/>
          <path d="M292 52l3 12h-6zM292 76l4 16h-8zM292 114l3 14-3 16-3-16z" fill="#0a2ca0"/>
          <path d="M292 159l75-43" stroke="#2e9c38" stroke-width="1.500"/>
          <path d="M367 116l-20 7 4 6zM329 138l-17 4-4 9z" fill="#2e9c38"/>
          <path d="M365 118l20-12M385 106l-13 4 4 5z" stroke="#1414b8" fill="#1414b8"/>
          <path d="M292 159l75 43" stroke="#d03838" stroke-width="1.500"/>
          <path d="M367 202l-20-7 4-6zM329 181l-20-8 3-6z" fill="#d03838"/>
          <path d="M367 202l19 11-14-4 4-4z" stroke="#0c0ce8" fill="#0c0ce8"/>
          <path d="M285 159h14M292 152v14" stroke="#1010c8" stroke-width="2"/>
          <g class="axis-text">
            <text x="292" y="50" fill="#2828e8">Z</text><text x="305" y="74" fill="#2450c8">ZM</text><text x="305" y="113" fill="#2450c8">ZC</text>
            <text x="391" y="107" fill="#2828e8">Y</text><text x="356" y="113" fill="#4c9c3c">YM</text><text x="323" y="133" fill="#5ca048">YC</text>
            <text x="325" y="197" fill="#d04040">XC</text><text x="358" y="216" fill="#d84058">XM</text><text x="391" y="222" fill="#1414e8">X</text>
          </g>
        </svg>
        <svg class="triad" viewBox="0 0 60 66">
          <path d="M12 16L28 7l16 9v18l-16 9-16-9z" fill="#dcdcdc" stroke="#b0b0b0"/>
          <path d="M28 7v36M12 16l32 18M12 34l32-18" stroke="#aaa" fill="none"/>
          <path d="M14 33l24-13" stroke="#a8c8ac" stroke-width="2.500"/>
          <path d="M12 33V12" stroke="#0c2ca0" stroke-width="3"/><path d="M12 4l3 9H9z" fill="#0c2ca0"/>
          <path d="M13 35l20 11" stroke="#b42828" stroke-width="3"/><path d="M38 49l-9-1 3-6z" fill="#b42828"/>
          <circle cx="12" cy="34" r="4" fill="#ccc" stroke="#999"/>
          <text x="8" y="4" class="t" fill="#2c4ce0">Z</text><text x="39" y="56" class="t" fill="#c03030">X</text>
          <path d="M40 12l3 3 4-4" stroke="#809880" fill="none"/>
        </svg>
      </section>

      <div class="dialog" role="dialog" aria-label="加工助手">
        <div class="dlg-title">
          <svg class="ic"><use href="#ms"/></svg>
          <span>加工助手 - 模圣软件（旗舰版）</span>
          <div class="dlg-btns">
            <button title="最小化"><i class="min"></i></button><button title="最大化"><i class="max"></i></button><button class="x" title="关闭"></button>
          </div>
        </div>
        <div class="dlg-body">
          <div class="dlg-tools">
            <button class="first"><svg class="ic"><use href="#first"/></svg></button>
            <button class="pin"><svg class="ic12"><use href="#pin"/></svg></button>
            <button class="tbtn"><svg class="ic24"><use href="#tool"/></svg></button>
            <button class="tbtn"><svg class="ic"><use href="#aup"/></svg></button>
            <button class="tbtn"><svg class="ic"><use href="#adown"/></svg></button>
            <button class="tbtn"><svg class="ic24"><use href="#block"/></svg></button>
            <button class="tbtn"><svg class="ic24"><use href="#teal"/></svg></button>
            <button class="tbtn"><svg class="ic24"><use href="#purx"/></svg></button>
            <button class="tbtn"><svg class="ic24"><use href="#flash"/></svg></button>
            <button class="tbtn"><svg class="ic24"><use href="#csys"/></svg></button>
            <button class="tbtn"><svg class="ic24"><use href="#redbase"/></svg></button>
            <button class="tbtn"><svg class="ic24"><use href="#hatch"/></svg></button>
            <button class="tbtn"><svg class="ic24"><use href="#tcopy"/></svg></button>
            <button class="tbtn"><svg class="ic24"><use href="#tdel"/></svg></button>
            <button class="tbtn letter">A</button>
            <button class="tbtn"><svg class="ic24"><use href="#redpart"/></svg></button>
          </div>

          <div class="params">
            <div class="combo tall"><svg class="ic"><use href="#doc"/></svg><select aria-label="模板"><option>系统模板</option></select><svg class="drop"><use href="#down"/></svg></div>
            <div class="combo-row">
              <div class="combo hot"><svg class="ic"><use href="#block"/></svg><select aria-label="几何体"><option>WORKPIECE</option></select><svg class="drop"><use href="#down"/></svg></div>
              <div class="combo"><svg class="ic"><use href="#no"/></svg><select aria-label="刀具"><option>NONE</option></select><svg class="drop"><use href="#down"/></svg></div>
            </div>
            <div class="grid-frame">
              <div class="grid-clip">
                <table class="grid">
                  <thead><tr><th>参数</th><th>值选项</th><th>单位</th></tr></thead>
                  <tbody>
                    <tr class="cyan"><td>参数模板</td><td></td><td></td></tr>
                    <tr class="cyan"><td>非切削参数模板</td><td></td><td></td></tr>
                    <tr class="ivory"><td>刀库</td><td>钢料通用刀库</td><td></td></tr>
                    <tr class="pink"><td>刀具参数</td><td></td><td></td></tr>
                    <tr class="almond"><td>进给</td><td>800</td><td></td></tr>
                    <tr class="almond"><td>主轴转速</td><td>12000</td><td></td></tr>
                    <tr class="cyan"><td>刀具</td><td>NONE</td><td></td></tr>
                    <tr class="rose"><td>参考刀具</td><td></td><td></td></tr>
                    <tr class="rose"><td>参考重叠距离</td><td></td><td></td></tr>
                    <tr class="rose"><td>处理中的工件</td><td>毛坯几何体</td><td></td></tr>
                    <tr class="ivory"><td><label for="same">底侧余量一致</label></td><td><input type="checkbox" id="same"></td><td></td></tr>
                    <tr class="pink"><td>侧面余量</td><td>0</td><td></td></tr>
                    <tr class="pink"><td>底面余量</td><td>0</td><td></td></tr>
                    <tr class="ivory"><td>Z向偏移</td><td>0</td><td></td></tr>
                    <tr class="yellow"><td>切削深度</td><td>0</td><td></td></tr>
                    <tr class="khaki"><td>切削层</td><td>恒定</td><td></td></tr>
                    <tr class="khaki"><td>步进</td><td>50</td><td>%刀具</td></tr>
                    <tr class="ivory"><td>拐角处光顺</td><td>无</td><td></td></tr>
                    <tr class="khaki"><td>拐角半径</td><td>0.500</td><td></td></tr>
                  </tbody>
                </table>
              </div>
              <div class="vscroll">
                <svg width="8" height="4" viewBox="0 0 8 4"><path d="M0 4h8L4 0z" fill="#333"/></svg>
                <i class="vthumb"></i>
                <svg class="to-end" width="8" height="4" viewBox="0 0 8 4"><path d="M0 0h8L4 4z" fill="#333"/></svg>
              </div>
            </div>
          </div>

          <div class="dlg-tools side">
            <button class="tbtn top"><svg class="ic"><use href="#gear"/></svg></button>
            <button class="tbtn"><svg class="ic24"><use href="#cavity"/></svg></button>
            <button class="tbtn"><svg class="ic24"><use href="#texta"/></svg></button>
            <button class="tbtn"><svg class="ic24"><use href="#zlevel"/></svg></button>
            <button class="tbtn"><svg class="ic24"><use href="#plate"/></svg></button>
          </div>

          <div class="templates">
            <div class="tpl-bar">
              <button class="insert">插入模板</button>
              <button class="tpl-save"><svg class="ic"><use href="#savebox"/></svg></button>
              <button class="tpl-save"><svg class="ic"><use href="#savepen"/></svg></button>
            </div>
            <div class="tpl-tree">
              <div class="tpl-col">模板</div>
              <ul class="tree">
                <li class="n1"><i class="exp">+</i><svg class="ic"><use href="#folder"/></svg><span>电极</span></li>
                <li class="n1"><i class="exp">+</i><svg class="ic"><use href="#folder"/></svg><span>钢料</span></li>
                <li class="n1 leaf"><svg class="ic"><use href="#globe"/></svg><span>ms_contour</span></li>
                <li class="n1"><i class="exp">−</i><svg class="ic"><use href="#globe"/></svg><span>ms_planar</span></li>
                <li class="n2"><svg class="ic"><use href="#mill"/></svg><span>FACE_MILLING_AREA</span></li>
                <li class="n2"><svg class="ic"><use href="#mill"/></svg><span>FACE_MILLING</span></li>
                <li class="n2"><svg class="ic"><use href="#mill"/></svg><span>FACE_MILLING_MANUAL</span></li>
                <li class="n2"><svg class="ic"><use href="#planar"/></svg><span>PLANAR_MILL</span></li>
                <li class="n2"><svg class="ic"><use href="#planar"/></svg><span>PLANAR_PROFILE</span></li>
                <li class="n2"><svg class="ic"><use href="#planar"/></svg><span>ROUGH_FOLLOW</span></li>
                <li class="n2"><svg class="ic"><use href="#planar"/></svg><span>ROUGH_ZIGZAG</span></li>
                <li class="n2"><svg class="ic"><use href="#planar"/></svg><span>ROUGH_ZIG</span></li>
                <li class="n2"><svg class="ic"><use href="#planar"/></svg><span>CLEANUP_CORNERS</span></li>
                <li class="n2"><svg class="ic"><use href="#planar"/></svg><span>FINISH_WALLS</span></li>
                <li class="n2 selected"><svg class="ic"><use href="#planar"/></svg><span>FINISH_FLOOR</span></li>
                <li class="n2"><svg class="ic"><use href="#thread"/></svg><span>THREAD_MILLING</span></li>
                <li class="n2 last"><svg class="ic"><use href="#planar"/></svg><span>PLANAR_TEXT</span></li>
                <li class="n1 leaf"><svg class="ic"><use href="#globe"/></svg><span>电极模板_10.0</span></li>
                <li class="n1 leaf last"><svg class="ic"><use href="#globe"/></svg><span>精钢模板_10.0</span></li>
              </ul>
              <div class="hscroll">
                <svg width="5" height="8" viewBox="0 0 5 8"><path d="M5 0v8L0 4z" fill="#222"/></svg>
                <i class="thumb grip"></i>
              </div>
            </div>
          </div>
        </div>
        <svg class="pointer" viewBox="0 0 13 20"><path d="M1 1v15l3-3 3 6 3-1-3-6h5z" fill="#fff" stroke="#333"/></svg>
      </div>
    </main>

    <footer class="status">
      <span>全部 1</span>
      <button title="全屏"><svg class="ic"><use href="#fullscr"/></svg></button>
    </footer>
    <div class="taskbar-edge"></div>
  </div>
</body>
</html>
```
FILE: styles.css
```css
* { box-sizing: border-box; }

body {
  margin: 0;
  font-family: "Noto Sans", "Noto Sans CJK SC", sans-serif;
  font-size: 12px;
  line-height: 16px;
  color: #1c1c1c;
  background: #fff;
}

button {
  border: none;
  padding: 0;
  margin: 0;
  background: none;
  font: inherit;
  color: inherit;
  white-space: nowrap;
}

h1, h2 { margin: 0; font-weight: normal; }
ul { list-style: none; margin: 0; padding: 0; }
svg { display: block; flex: none; }
.sprite { position: absolute; }

.ic { width: 16px; height: 16px; }
.ic12 { width: 12px; height: 12px; }
.ic24 { width: 24px; height: 24px; }
.ic32 { width: 32px; height: 32px; }
.ic32.inset { padding: 4px; }
.drop { width: 6px; height: 4px; }

.app {
  display: flex;
  flex-direction: column;
  height: 100vh;
  overflow: hidden;
}

/* title bar */
.titlebar {
  display: flex;
  align-items: center;
  height: 28px;
  padding-left: 4px;
}
.quick { display: flex; align-items: center; }
.nx-logo {
  width: 34px;
  font: bold 23px/28px "Liberation Sans", sans-serif;
  color: #7d98a6;
}
.sep { width: 1px; height: 22px; background: #d4d4d4; }
.quick .sep { margin: 0 4px; }
.qa { display: flex; align-items: center; padding: 0 3px; height: 22px; }
.qa.has-drop { gap: 6px; padding-right: 1px; }
.qa-text { display: flex; align-items: center; gap: 4px; margin-right: 6px; }
.qa-more { border-top: 2px solid #222; padding-top: 1px; }
.title { flex: 1; text-align: center; font-size: 13px; color: #111; }
.siemens {
  margin-right: 22px;
  font: bold 15px/28px "Open Sans", sans-serif;
  color: #0b8f90;
}
.win-btns { display: flex; gap: 7px; padding-right: 5px; }
.win-btns button { width: 16px; display: flex; justify-content: center; }

/* tabs */
.tabs { display: flex; height: 29px; background: #dcdcdc; }
.tab { padding: 0 13px; font-size: 14px; }
.tab.file { width: 85px; padding: 0; margin-right: 2px; background: #55a0b8; color: #fff; }
.tab.active { background: #fff; border-top: 1px solid #999; color: #00607c; }
.tabs-right { display: flex; align-items: center; gap: 11px; margin-left: auto; padding-right: 9px; }
.search {
  display: flex;
  align-items: center;
  width: 139px;
  height: 21px;
  padding-right: 3px;
  border: 1px solid #a4a4a4;
  background: #fff;
}
.search input { flex: 1; min-width: 0; border: none; padding: 0 2px; background: none; font: inherit; outline: none; }
.search input::placeholder { color: #a8a8a8; }
.tutorial { display: flex; align-items: center; gap: 4px; }

/* ribbon */
.ribbon { display: flex; height: 97px; border-bottom: 1px solid #d4d4d4; }
.big { display: flex; flex-direction: column; align-items: center; padding-top: 4px; color: #111; }
.big .ic32 { margin-bottom: 5px; }
.big .drop { margin-top: 4px; }
.menu-btn { width: 50px; padding-top: 9px; }
.ic-menu { width: 32px; height: 26px; margin-bottom: 6px; }
.group {
  display: flex;
  flex-direction: column;
  position: relative;
}
.group::before {
  content: "";
  position: absolute;
  left: 0;
  top: 5px;
  bottom: 5px;
  border-left: 1px solid #d8d8d8;
}
.group-body { display: grid; flex: 1; padding: 1px 5px 0 13px; align-items: start; }
.group-title { display: flex; align-items: center; height: 18px; padding-right: 8px; color: #00607c; }
.group-title span { flex: 1; text-align: center; }
.general .group-body { grid-template-columns: 109px 81px 88px 89px 91px 36px; }
.modeling .group-body { grid-template-columns: 97px 78px 82px 82px 78px 37px; }
.analysis .group-body { grid-template-columns: 57px 25px 28px 37px; }
.etools .group-body { grid-template-columns: 32px 25px 26px; padding-right: 0; }
.edraw .group-body { grid-template-columns: 29px; }
.edraw .group-title span { text-align: left; padding-left: 4px; }
.system .group-body { grid-template-columns: 45px 22px; }
.about .group-body { grid-template-columns: 48px; padding: 1px 11px 0; }
.analysis .big:first-child,
.system .big:first-child { justify-self: start; }
.tail { flex: 1; }
.col { display: grid; grid-auto-rows: 23px; }
.col.two { grid-auto-rows: 35px; padding-top: 3px; }
.cmd { display: flex; align-items: center; gap: 4px; text-align: left; }
.cmd .drop { margin-left: 4px; }
.more-box {
  display: flex;
  align-items: center;
  justify-content: center;
  width: 37px;
  height: 34px;
  margin-bottom: 3px;
  border: 1px solid #dcdcdc;
  border-radius: 4px;
}
.bar-end { margin-left: auto; margin-top: auto; padding-right: 6px; height: 20px; }

/* selection bar */
.selbar { display: flex; align-items: center; height: 33px; border-bottom: 1px solid #8c8c8c; padding-left: 10px; }
.selbar .sep { margin: 0 10px 0 5px; height: 26px; }
.selmenu { display: flex; align-items: center; gap: 4px; }
.cell { display: flex; align-items: center; justify-content: center; width: 25px; height: 22px; }
.cell.on { background: #cfe6ec; width: 23px; }
.cell.wide { width: 35px; gap: 6px; padding-left: 2px; }
.picker {
  position: relative;
  height: 22px;
  margin-left: 3px;
  margin-right: 6px;
}
.picker.filter { width: 147px; }
.picker.scope { width: 155px; }
.picker select {
  appearance: none;
  width: 100%;
  height: 100%;
  padding: 0 2px;
  border: 1px solid #a0a0a0;
  border-radius: 0;
  background: #fff;
  font: inherit;
  color: inherit;
}
.picker .drop, .combo .drop { position: absolute; right: 5px; top: 50%; margin-top: -2px; pointer-events: none; width: 8px; height: 5px; }

/* workspace */
.workspace { position: relative; display: flex; flex: 1; min-height: 0; }
.rail {
  display: flex;
  flex-direction: column;
  width: 32px;
  background: #dcdcdc;
  border-right: 1px solid #a4a4a4;
}
.rail-gear { height: 26px; margin-bottom: 16px; padding-left: 7px; }
.rail-btn { display: flex; align-items: center; justify-content: center; height: 42px; margin-left: 2px; }
.rail-btn.active { background: #fff; border: 1px solid #999; border-right: none; margin-right: -1px; }
.rail-btn.spaced { margin-top: 12px; }

.navigator {
  display: flex;
  flex-direction: column;
  width: 270px;
  padding: 0 10px 6px 6px;
  border-right: 1px solid #8c8c8c;
}
.nav-head { display: flex; align-items: center; justify-content: space-between; height: 29px; padding: 0 6px 0 4px; }
.nav-head h2 { font-size: 13px; }
.dock { width: 13px; height: 11px; border: 1px solid #111; border-top-width: 2px; }
.nav-tree { display: flex; flex-direction: column; flex: 1; min-height: 0; border: 1px solid #d4d4d4; padding: 0 1px; }
.nav-col { height: 20px; padding: 2px 5px; background: #efefef; border-bottom: 1px solid #d4d4d4; }
.tree {
  flex: 1;
  overflow: hidden;
  background: repeating-linear-gradient(#fff 0 19px, #ebebeb 19px 20px, #f9f9f9 20px 39px, #ebebeb 39px 40px);
}
.tree li { position: relative; display: flex; align-items: center; height: 20px; white-space: nowrap; }
.tree .root { padding-left: 3px; }
.node { padding-left: 19px; }
.node span { padding: 0 3px; line-height: 19px; }
/* dotted tree lines */
.node::before, .n1::before, .n2::before {
  content: "";
  position: absolute;
  top: 0;
  height: 20px;
  width: 10px;
  border-left: 1px dotted #999;
}
.node::after, .n1::after, .n2::after {
  content: "";
  position: absolute;
  top: 10px;
  width: 9px;
  border-top: 1px dotted #999;
}
.node::before, .node::after { left: 9px; }
.tree .last::before { height: 10px; }
.node.dim { color: #86a994; }
.tree .selected span { flex: 1; background: #8cc0cf; }
.hscroll { display: flex; align-items: center; height: 16px; padding: 0 6px; background: #eee; }
.thumb { width: 15px; height: 14px; margin-left: 7px; border: 1px solid #999; border-radius: 1px; background: linear-gradient(#f8f8f8 50%, #d8d8d8 50%); }
.thumb.grip {
  width: 40px;
  background: repeating-linear-gradient(90deg, #555 0 1px, transparent 1px 3px) center / 8px 7px no-repeat, linear-gradient(#f8f8f8 50%, #d8d8d8 50%);
}
.to-end { margin-left: auto; }
.splitter { height: 5px; border: 1px solid #a8a8a8; background: #dcdcdc; }
.fold {
  display: flex;
  align-items: center;
  justify-content: space-between;
  height: 25px;
  padding: 0 6px;
  border-bottom: 2px solid #d0d0d0;
  font-size: 15px;
  color: #005f7c;
}

.view { position: relative; flex: 1; min-width: 0; }
.doc-tabs { display: flex; height: 26px; border-bottom: 2px solid #5a9cb0; }
.doc-tab { display: flex; align-items: center; gap: 6px; padding: 0 5px; background: #539fb6; color: #fff; font-size: 13px; }
.part { position: absolute; left: 138px; top: 153px; width: 560px; height: 360px; }
.axis-text { font: 14px "Liberation Sans", sans-serif; text-anchor: middle; }
.triad { position: absolute; left: 44px; bottom: 28px; width: 60px; height: 66px; overflow: visible; }
.triad .t { font: 10px "Liberation Sans", sans-serif; }

/* assistant dialog, hangs over the right edge */
.dialog {
  position: absolute;
  left: 990px;
  right: -60px;
  top: 35px;
  bottom: 52px;
  display: flex;
  flex-direction: column;
  padding: 0 6px 6px;
  border: 1px solid #28323c;
  border-radius: 7px;
  background: linear-gradient(100deg, #c3dbf3, #d4e8fb 15%, #bdd6ef 40%, #d6eafc 60%, #c4dcf4);
  box-shadow: 0 4px 12px 4px rgba(0, 0, 0, .55), inset 0 0 0 1px #eef6fd;
}
.dlg-title { display: flex; align-items: center; gap: 5px; height: 28px; padding-bottom: 3px; font-size: 13px; color: #111; }
.dlg-btns { display: flex; align-self: flex-start; margin-left: auto; }
.dlg-btns button {
  display: flex;
  align-items: center;
  justify-content: center;
  width: 28px;
  height: 18px;
  border: 1px solid #58687c;
  border-top: none;
  background: linear-gradient(#dfe9f4 50%, #b6c8dc 50%);
}
.dlg-btns button:first-child { border-bottom-left-radius: 4px; }
.dlg-btns .x { width: 38px; background: #c8503c; }
.dlg-btns .min { width: 12px; height: 5px; margin-top: 6px; border: 1px solid #445; background: #fff; }
.dlg-btns .max { width: 12px; height: 9px; border: 2px solid #556; background: #fff; }
.dlg-body { display: flex; flex: 1; min-height: 0; background: #efefef; border: 1px solid #5c7080; }
.dlg-tools {
  display: flex;
  flex-direction: column;
  align-items: center;
  gap: 4px;
  width: 43px;
  padding: 7px 2px 0 0;
  background: #dadada;
  border-right: 1px solid #c8c8c8;
}
.first { width: 21px; height: 23px; padding-left: 2px; border: 1px solid #c0c0c0; }
.pin { margin: 4px 0 11px; height: 13px; }
.tbtn { display: flex; align-items: center; justify-content: center; width: 30px; height: 31px; border: 1px solid #a8a8a8; background: #e0e0e0; }
.letter { font: bold 26px/28px "Liberation Serif", serif; color: #0808d8; }
.dlg-tools.side { width: 42px; padding-right: 0; border-left: 1px solid #c8c8c8; }
.side .tbtn { width: 32px; }
.side .top { height: 28px; margin-bottom: 7px; }

.params { display: flex; flex-direction: column; width: 301px; padding: 7px 10px 16px 7px; }
.combo { position: relative; flex: 1; height: 24px; }
.combo.tall { flex: none; height: 28px; margin-bottom: 12px; }
.combo-row { display: flex; gap: 5px; margin-bottom: 10px; }
.combo .ic { position: absolute; left: 4px; top: 50%; margin-top: -8px; pointer-events: none; }
.combo select {
  appearance: none;
  width: 100%;
  height: 100%;
  padding: 0 0 0 22px;
  border: 1px solid #707070;
  border-radius: 2px;
  background: linear-gradient(#f4f4f4, #ebebeb 50%, #dcdcdc 50%, #d0d0d0);
  font: inherit;
  color: #111;
}
.combo.hot select { border-color: #3c7fb1; background: linear-gradient(#eaf6fd, #d9f0fc 50%, #bee6fd 50%, #a7d9f5); }
.grid-frame { display: flex; flex: 1; min-height: 0; border-left: 1px solid #909090; border-top: 1px solid #909090; border-bottom: 1px solid #fff; }
.grid-clip { flex: 1; overflow: hidden; }
.grid { width: 263px; table-layout: fixed; border-collapse: collapse; }
.grid th { height: 24px; padding: 2px 6px 0; text-align: left; font-weight: normal; background: #efefef; border-right: 1px solid #d4d4d4; }
.grid th:first-child { width: 112px; }
.grid th:nth-child(2) { width: 100px; }
.grid th:last-child, .grid td:last-child { border-right: none; }
.grid td { height: 24px; padding: 1px 5px 0; border-top: 1px solid #ececec; border-right: 1px solid #ececec; }
.grid td:first-child { padding-left: 10px; }
.grid input { display: block; appearance: none; width: 13px; height: 13px; margin: 0; border: 1px solid #1c5180; background: linear-gradient(135deg, #d4d4d0, #fff); }
.cyan { background: #00ced1; }
.ivory { background: #ffffe0; }
.pink { background: #ffc0cb; }
.almond { background: #ffebcd; }
.rose { background: #ffc1c1; }
.yellow { background: #ff0; }
.khaki { background: #fff68f; }
.vscroll { display: flex; flex-direction: column; align-items: center; width: 18px; padding: 7px 2px; background: #ededed; }
.vthumb {
  width: 15px;
  height: 92px;
  margin-top: 7px;
  border: 1px solid #999;
  border-radius: 2px;
  background: repeating-linear-gradient(#555 0 1px, transparent 1px 3px) center / 7px 8px no-repeat, linear-gradient(90deg, #f8f8f8 50%, #d4d4d4 50%);
}
.vscroll .to-end { margin: auto 0 0; }

.templates { display: flex; flex-direction: column; flex: 1; min-width: 0; padding: 7px 8px 16px; }
.tpl-bar { display: flex; gap: 9px; height: 28px; margin-bottom: 11px; }
.tpl-bar button { border: 1px solid #b4b4b4; background: #e1e1e1; }
.insert { width: 84px; margin-right: 2px; }
.tpl-save { display: flex; align-items: center; justify-content: center; width: 26px; }
.tpl-tree { display: flex; flex-direction: column; flex: 1; min-height: 0; border: 1px solid #909090; border-bottom-color: #fff; }
.tpl-col { height: 24px; padding: 5px 9px; border-bottom: 1px solid #d0d0d0; }
.n1 { padding-left: 20px; }
.n1 span { padding-left: 5px; }
.n2 {
  padding-left: 39px;
  background: repeating-linear-gradient(#999 0 1px, transparent 1px 2px) 10px 0 / 1px 20px no-repeat;
}
.n2 span { line-height: 19px; }
.n2 .ic { margin-right: 5px; }
.n1::before, .n1::after { left: 10px; }
.n2::before, .n2::after { left: 29px; }
.exp {
  position: absolute;
  left: 6px;
  top: 6px;
  z-index: 1;
  width: 9px;
  height: 9px;
  border: 1px solid #888;
  background: #fff;
  font: 9px/7px "Liberation Sans", sans-serif;
  text-align: center;
}
.pointer { position: absolute; left: 118px; top: 92px; width: 13px; height: 20px; filter: drop-shadow(1px 2px 1px rgba(0, 0, 0, .4)); }

/* status */
.status {
  display: flex;
  align-items: center;
  height: 22px;
  padding-left: 18px;
  border-top: 1px solid #a8a8a8;
  font-weight: bold;
}
.status span { flex: 1; text-align: center; padding-bottom: 3px; }
.status button { margin-right: 55px; }
.taskbar-edge { height: 2px; background: linear-gradient(#20343f 50%, #9cc0d4 50%); }
```
